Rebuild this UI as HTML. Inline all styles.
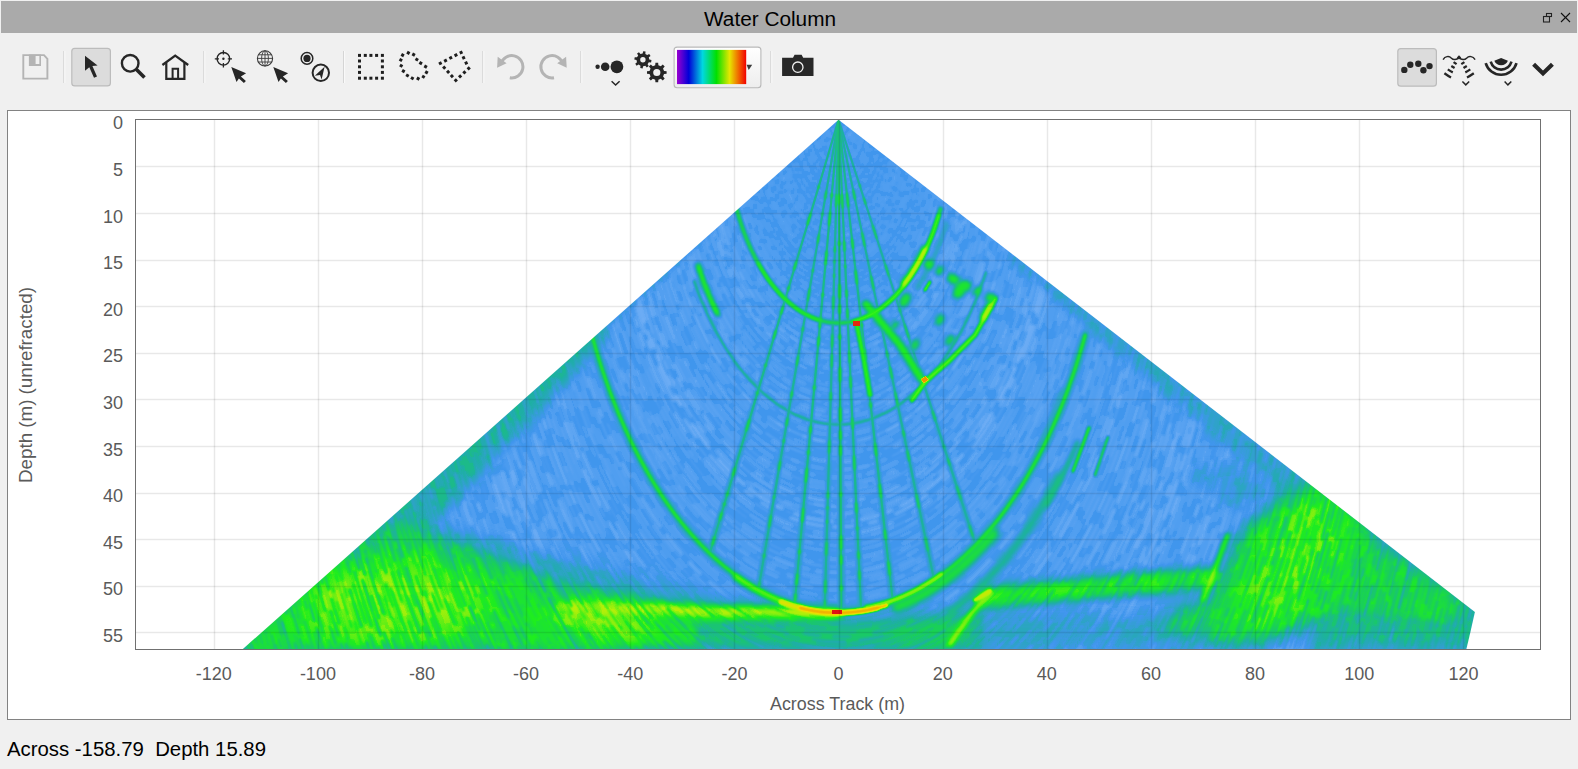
<!DOCTYPE html>
<html><head><meta charset="utf-8"><style>
html,body{margin:0;padding:0;width:1578px;height:769px;overflow:hidden;background:#f0f0f0;}
svg{position:absolute;left:0;top:0;}
text{font-family:"Liberation Sans",sans-serif;}
</style></head><body>
<svg width="1578" height="769" viewBox="0 0 1578 769">

<rect x="1" y="1" width="1576" height="32" fill="#aaaaaa"/>
<text x="704" y="26" font-size="20" fill="#000" textLength="132" lengthAdjust="spacingAndGlyphs">Water Column</text>
<g fill="none" stroke="#222" stroke-width="1.1"><rect x="1543.5" y="16.5" width="6" height="5.5"/><rect x="1546.5" y="13.5" width="5" height="3"/></g>
<g stroke="#111" stroke-width="1.1"><line x1="1561" y1="13" x2="1570" y2="22"/><line x1="1570" y1="13" x2="1561" y2="22"/></g>
<line x1="63.8" y1="51" x2="63.8" y2="83" stroke="#d2d2d2" stroke-width="1"/>
<line x1="64.8" y1="51" x2="64.8" y2="83" stroke="#fafafa" stroke-width="1"/>
<line x1="203.8" y1="51" x2="203.8" y2="83" stroke="#d2d2d2" stroke-width="1"/>
<line x1="204.8" y1="51" x2="204.8" y2="83" stroke="#fafafa" stroke-width="1"/>
<line x1="343.6" y1="51" x2="343.6" y2="83" stroke="#d2d2d2" stroke-width="1"/>
<line x1="344.6" y1="51" x2="344.6" y2="83" stroke="#fafafa" stroke-width="1"/>
<line x1="482.8" y1="51" x2="482.8" y2="83" stroke="#d2d2d2" stroke-width="1"/>
<line x1="483.8" y1="51" x2="483.8" y2="83" stroke="#fafafa" stroke-width="1"/>
<line x1="580.8" y1="51" x2="580.8" y2="83" stroke="#d2d2d2" stroke-width="1"/>
<line x1="581.8" y1="51" x2="581.8" y2="83" stroke="#fafafa" stroke-width="1"/>
<line x1="770.8" y1="51" x2="770.8" y2="83" stroke="#d2d2d2" stroke-width="1"/>
<line x1="771.8" y1="51" x2="771.8" y2="83" stroke="#fafafa" stroke-width="1"/>
<rect x="71.8" y="48.3" width="38.6" height="37.6" rx="3" fill="#dcdcdc" stroke="#bcbcbc" stroke-width="1.2"/>
<rect x="1397.8" y="48.6" width="38.6" height="37.6" rx="3" fill="#dcdcdc" stroke="#bcbcbc" stroke-width="1.2"/>
<path d="M23.3,55.1 H44 L47.4,58.8 V78.6 H23.3 Z" fill="none" stroke="#b4b4b4" stroke-width="1.9"/>
<path d="M28.9,54.5 H41 V65.9 H28.9 Z M35.6,56 V64 H39.4 V56 Z" fill="#b4b4b4" fill-rule="evenodd"/>
<path d="M85,55.7 L85,70.8 L89.3,67.2 L94,77.8 L97,76.4 L92.4,65.9 L97.6,65.4 Z" fill="#262626"/>
<circle cx="130.2" cy="63.3" r="8.3" fill="none" stroke="#262626" stroke-width="2.4"/>
<line x1="136.2" y1="69.2" x2="144.5" y2="77.6" stroke="#262626" stroke-width="3.6"/>
<path d="M162.4,65 L175.2,55.6 L188.2,65" fill="none" stroke="#262626" stroke-width="2.3"/>
<path d="M166.3,62.8 V78.9 H184.4 V62.8" fill="none" stroke="#262626" stroke-width="2.2"/>
<path d="M172.6,78.9 V68.7 H178.1 V78.9" fill="none" stroke="#262626" stroke-width="2"/>
<circle cx="223.4" cy="58.8" r="6.3" fill="none" stroke="#262626" stroke-width="1.4"/>
<circle cx="223.4" cy="58.8" r="1.2" fill="#262626"/>
<path d="M223.4,50.2 V54.5 M223.4,63.1 V67.5 M214.8,58.8 H219 M227.8,58.8 H232" stroke="#262626" stroke-width="1.3"/>
<path d="M231.3,66.9 L236.5,81.9 L238.9,78.4 L243.9,83.1 L245.9,81.1 L240.9,76.5 L246.1,73.2 Z" fill="#262626"/>
<circle cx="265" cy="58.4" r="7.6" fill="none" stroke="#3a3a3a" stroke-width="1.1"/>
<ellipse cx="265" cy="58.4" rx="3.4" ry="7.6" fill="none" stroke="#3a3a3a" stroke-width="0.9"/>
<path d="M265,50.8 V66 M257.6,58.4 H272.4 M258.6,54.8 H271.4 M258.6,62 H271.4" stroke="#3a3a3a" stroke-width="0.9"/>
<path d="M273.3,66.9 L278.5,81.9 L280.9,78.4 L285.9,83.1 L287.9,81.1 L282.9,76.5 L288.1,73.2 Z" fill="#262626"/>
<circle cx="307" cy="58.4" r="5.8" fill="none" stroke="#262626" stroke-width="1.5"/>
<circle cx="307" cy="58.4" r="3.6" fill="#262626"/>
<circle cx="320.8" cy="72.8" r="8.2" fill="none" stroke="#262626" stroke-width="2"/>
<path d="M324.6,66.8 L314.8,75.8 L320,75 L321.6,79.4 Z" fill="#262626"/>
<rect x="358.0" y="53.9" width="3" height="3" fill="#1e1e1e"/>
<rect x="358.0" y="76.7" width="3" height="3" fill="#1e1e1e"/>
<rect x="363.8" y="53.9" width="3" height="3" fill="#1e1e1e"/>
<rect x="363.8" y="76.7" width="3" height="3" fill="#1e1e1e"/>
<rect x="369.4" y="53.9" width="3" height="3" fill="#1e1e1e"/>
<rect x="369.4" y="76.7" width="3" height="3" fill="#1e1e1e"/>
<rect x="375.1" y="53.9" width="3" height="3" fill="#1e1e1e"/>
<rect x="375.1" y="76.7" width="3" height="3" fill="#1e1e1e"/>
<rect x="380.9" y="53.9" width="3" height="3" fill="#1e1e1e"/>
<rect x="380.9" y="76.7" width="3" height="3" fill="#1e1e1e"/>
<rect x="358.0" y="59.5" width="3" height="3" fill="#1e1e1e"/>
<rect x="380.9" y="59.5" width="3" height="3" fill="#1e1e1e"/>
<rect x="358.0" y="65.3" width="3" height="3" fill="#1e1e1e"/>
<rect x="380.9" y="65.3" width="3" height="3" fill="#1e1e1e"/>
<rect x="358.0" y="70.9" width="3" height="3" fill="#1e1e1e"/>
<rect x="380.9" y="70.9" width="3" height="3" fill="#1e1e1e"/>
<rect x="406.8" y="51.4" width="3" height="3" fill="#1e1e1e" transform="rotate(30 408.3 52.9)"/>
<rect x="412.1" y="53.1" width="3" height="3" fill="#1e1e1e" transform="rotate(30 413.6 54.6)"/>
<rect x="415.3" y="58.0" width="3" height="3" fill="#1e1e1e" transform="rotate(30 416.8 59.5)"/>
<rect x="419.2" y="61.6" width="3" height="3" fill="#1e1e1e" transform="rotate(30 420.7 63.1)"/>
<rect x="424.1" y="65.1" width="3" height="3" fill="#1e1e1e" transform="rotate(30 425.6 66.6)"/>
<rect x="425.0" y="70.9" width="3" height="3" fill="#1e1e1e" transform="rotate(30 426.5 72.4)"/>
<rect x="421.9" y="75.3" width="3" height="3" fill="#1e1e1e" transform="rotate(30 423.4 76.8)"/>
<rect x="416.6" y="77.1" width="3" height="3" fill="#1e1e1e" transform="rotate(30 418.1 78.6)"/>
<rect x="410.8" y="76.7" width="3" height="3" fill="#1e1e1e" transform="rotate(30 412.3 78.2)"/>
<rect x="405.9" y="74.0" width="3" height="3" fill="#1e1e1e" transform="rotate(30 407.4 75.5)"/>
<rect x="401.9" y="69.6" width="3" height="3" fill="#1e1e1e" transform="rotate(30 403.4 71.1)"/>
<rect x="399.7" y="64.2" width="3" height="3" fill="#1e1e1e" transform="rotate(30 401.2 65.7)"/>
<rect x="399.3" y="58.5" width="3" height="3" fill="#1e1e1e" transform="rotate(30 400.8 60)"/>
<rect x="401.1" y="53.6" width="3" height="3" fill="#1e1e1e" transform="rotate(30 402.6 55.1)"/>
<rect x="459.6" y="50.9" width="3" height="3" fill="#1e1e1e" transform="rotate(65 461.1 52.4)"/>
<rect x="462.1" y="56.2" width="3" height="3" fill="#1e1e1e" transform="rotate(65 463.6 57.7)"/>
<rect x="464.7" y="61.6" width="3" height="3" fill="#1e1e1e" transform="rotate(65 466.2 63.1)"/>
<rect x="467.2" y="66.9" width="3" height="3" fill="#1e1e1e" transform="rotate(137 468.7 68.4)"/>
<rect x="462.9" y="70.9" width="3" height="3" fill="#1e1e1e" transform="rotate(137 464.4 72.4)"/>
<rect x="458.6" y="74.9" width="3" height="3" fill="#1e1e1e" transform="rotate(137 460.1 76.4)"/>
<rect x="454.3" y="78.9" width="3" height="3" fill="#1e1e1e" transform="rotate(-132 455.8 80.4)"/>
<rect x="450.4" y="74.6" width="3" height="3" fill="#1e1e1e" transform="rotate(-132 451.9 76.1)"/>
<rect x="446.6" y="70.3" width="3" height="3" fill="#1e1e1e" transform="rotate(-132 448.1 71.8)"/>
<rect x="442.7" y="66.1" width="3" height="3" fill="#1e1e1e" transform="rotate(-132 444.2 67.6)"/>
<rect x="438.8" y="61.8" width="3" height="3" fill="#1e1e1e" transform="rotate(-28 440.3 63.3)"/>
<rect x="444.0" y="59.1" width="3" height="3" fill="#1e1e1e" transform="rotate(-28 445.5 60.6)"/>
<rect x="449.2" y="56.3" width="3" height="3" fill="#1e1e1e" transform="rotate(-28 450.7 57.8)"/>
<rect x="454.4" y="53.6" width="3" height="3" fill="#1e1e1e" transform="rotate(-28 455.9 55.1)"/>
<g><path d="M500.9,63.9 A11.2,11.2 0 1 1 509.8,77.8" fill="none" stroke="#b4b4b4" stroke-width="3"/><path d="M497.1,67.8 L497.7,56.8 L506.6,63.2 Z" fill="#b4b4b4"/></g>
<g transform="translate(1063.8,0) scale(-1,1)"><path d="M500.9,63.9 A11.2,11.2 0 1 1 509.8,77.8" fill="none" stroke="#b4b4b4" stroke-width="3"/><path d="M497.1,67.8 L497.7,56.8 L506.6,63.2 Z" fill="#b4b4b4"/></g>
<circle cx="597.6" cy="66.8" r="2.2" fill="#262626"/><circle cx="605.2" cy="66.8" r="4.3" fill="#262626"/><circle cx="616.9" cy="66.8" r="6.4" fill="#262626"/>
<path d="M611.6,81.2 L615.6,85 L619.6,81.2" fill="none" stroke="#262626" stroke-width="1.5"/>
<path d="M649.29,59.53 L651.49,60.12 L651.08,62.44 L648.82,62.24 L647.61,64.13 L648.75,66.10 L646.82,67.45 L645.36,65.71 L643.17,66.19 L642.58,68.39 L640.26,67.98 L640.46,65.72 L638.57,64.51 L636.60,65.65 L635.25,63.72 L636.99,62.26 L636.51,60.07 L634.31,59.48 L634.72,57.16 L636.98,57.36 L638.19,55.47 L637.05,53.50 L638.98,52.15 L640.44,53.89 L642.63,53.41 L643.22,51.21 L645.54,51.62 L645.34,53.88 L647.23,55.09 L649.20,53.95 L650.55,55.88 L648.81,57.34 Z M645.6,59.8 A2.7,2.7 0 1 0 640.1999999999999,59.8 A2.7,2.7 0 1 0 645.6,59.8 Z" fill="#262626" fill-rule="evenodd"/>
<path d="M664.03,70.91 L666.61,71.14 L666.61,73.86 L664.03,74.09 L663.03,76.49 L664.69,78.48 L662.78,80.39 L660.79,78.73 L658.39,79.73 L658.16,82.31 L655.44,82.31 L655.21,79.73 L652.81,78.73 L650.82,80.39 L648.91,78.48 L650.57,76.49 L649.57,74.09 L646.99,73.86 L646.99,71.14 L649.57,70.91 L650.57,68.51 L648.91,66.52 L650.82,64.61 L652.81,66.27 L655.21,65.27 L655.44,62.69 L658.16,62.69 L658.39,65.27 L660.79,66.27 L662.78,64.61 L664.69,66.52 L663.03,68.51 Z M660.4,72.5 A3.6,3.6 0 1 0 653.1999999999999,72.5 A3.6,3.6 0 1 0 660.4,72.5 Z" fill="#262626" fill-rule="evenodd"/>
<defs><linearGradient id="btng" x1="0" y1="0" x2="0" y2="1"><stop offset="0" stop-color="#ffffff"/><stop offset="1" stop-color="#ededed"/></linearGradient><linearGradient id="cmg" x1="0" y1="0" x2="1" y2="0"><stop offset="0" stop-color="#9a00d0"/><stop offset="0.17" stop-color="#0000d8"/><stop offset="0.37" stop-color="#00d8e0"/><stop offset="0.57" stop-color="#00e000"/><stop offset="0.76" stop-color="#e6e600"/><stop offset="0.88" stop-color="#f07000"/><stop offset="1" stop-color="#f20000"/></linearGradient></defs>
<rect x="674.1" y="47.1" width="86.8" height="40.6" rx="3" fill="url(#btng)" stroke="#b9b9b9" stroke-width="1.1"/>
<rect x="677" y="49.9" width="69.2" height="34.2" fill="url(#cmg)"/>
<path d="M746.6,64.8 L752.2,64.8 L748.7,69.9 Z" fill="#3a3a3a"/>
<path d="M782.1,57.7 H793 L794.6,54.7 H801.6 L803.2,57.7 H813.5 V76 H782.1 Z" fill="#282828"/>
<circle cx="797.8" cy="67.2" r="5.2" fill="none" stroke="#f0f0f0" stroke-width="1.3"/>
<circle cx="1404.3" cy="69.9" r="3.2" fill="#262626"/>
<circle cx="1410.3" cy="64.7" r="3.2" fill="#262626"/>
<circle cx="1418.3" cy="63.7" r="3.2" fill="#262626"/>
<circle cx="1423.4" cy="70.2" r="3.2" fill="#262626"/>
<circle cx="1429.5" cy="66.1" r="3.2" fill="#262626"/>
<path d="M1443.1,59.6 C1445,56.2 1449,55.6 1451.2,58 C1453.5,60.4 1456.5,60 1459,57.6 C1461.5,60 1464.5,60.4 1466.8,58 C1469,55.6 1473,56.2 1475.1,59.6" fill="none" stroke="#262626" stroke-width="1.5"/>
<path d="M1459,55.2 L1461.2,57.4 L1459,59.4 L1456.8,57.4 Z" fill="#262626"/>
<path d="M1453.6,62.1 Q1455.1,63.099999999999994 1456.6,64.1 M1451.3,66.0 Q1452.9499999999998,67.0 1454.6,68.0 M1447.8,69.4 Q1450.7,71.4 1452.8,72.4 M1444.4,73.3 Q1448.1000000000001,75.94999999999999 1451.0,77.6 M1461.3,64.1 Q1462.85,63.099999999999994 1464.4,62.1 M1463.5,68.0 Q1465.15,67.0 1466.8,66.0 M1465.3,72.4 Q1467.3999999999999,71.4 1470.3,69.4 M1467.0,77.6 Q1470.0,75.94999999999999 1473.8,73.3" fill="none" stroke="#262626" stroke-width="2.3"/>
<path d="M1462.4,81.5 L1465.8,84.9 L1469.2,81.5" fill="none" stroke="#262626" stroke-width="1.5"/>
<path d="M1516.5,63.1 A16.0,16.0 0 0 1 1485.7,63.1" fill="none" stroke="#262626" stroke-width="2.6"/>
<path d="M1511.5,61.7 A10.8,10.8 0 0 1 1490.7,61.7" fill="none" stroke="#262626" stroke-width="2.6"/>
<path d="M1494.3,60.7 L1501.1,58.0 L1507.9,60.7 A7.4,7.4 0 0 1 1494.3,60.7 Z" fill="#262626"/>
<path d="M1504.6,81.5 L1507.9,84.9 L1511.3,81.5" fill="none" stroke="#262626" stroke-width="1.5"/>
<path d="M1533.6,64.2 L1543,73.4 L1552.4,64.2" fill="none" stroke="#262626" stroke-width="4.2"/>
<rect x="7.5" y="110.5" width="1563" height="609" fill="#ffffff" stroke="#828282" stroke-width="1"/>
<defs>
<clipPath id="fan"><path d="M838.55,119.8 L242.9,649 L1466.4,649 A693,1240.5 0 0 0 1474.9,611.9 Z"/></clipPath>
<filter id="cmap" filterUnits="userSpaceOnUse" x="130" y="110" width="1420" height="550" color-interpolation-filters="sRGB"><feComponentTransfer><feFuncR type="table" tableValues="0.529 0.502 0.474 0.446 0.418 0.391 0.363 0.335 0.308 0.280 0.252 0.236 0.221 0.206 0.191 0.176 0.161 0.145 0.130 0.117 0.114 0.111 0.108 0.105 0.101 0.098 0.101 0.103 0.106 0.109 0.112 0.115 0.117 0.180 0.250 0.321 0.392 0.463 0.534 0.604 0.675 0.711 0.741 0.771 0.801 0.831 0.861 0.891 0.921 0.949 0.949 0.949 0.949 0.949 0.949 0.949 0.949 0.944 0.935 0.927 0.918 0.909 0.900 0.891 0.882"/><feFuncG type="table" tableValues="0.729 0.715 0.701 0.687 0.673 0.659 0.645 0.631 0.617 0.603 0.589 0.599 0.610 0.621 0.632 0.644 0.655 0.666 0.677 0.690 0.708 0.727 0.746 0.765 0.783 0.802 0.821 0.839 0.857 0.876 0.894 0.913 0.931 0.934 0.935 0.936 0.937 0.938 0.939 0.940 0.941 0.934 0.925 0.916 0.907 0.898 0.889 0.880 0.871 0.861 0.824 0.788 0.751 0.715 0.678 0.642 0.605 0.552 0.485 0.417 0.349 0.282 0.214 0.146 0.078"/><feFuncB type="table" tableValues="0.973 0.969 0.965 0.961 0.957 0.953 0.949 0.945 0.941 0.937 0.933 0.902 0.869 0.837 0.804 0.772 0.739 0.706 0.674 0.639 0.596 0.552 0.508 0.464 0.421 0.377 0.340 0.304 0.267 0.231 0.195 0.158 0.122 0.109 0.099 0.090 0.080 0.070 0.060 0.051 0.041 0.035 0.031 0.027 0.022 0.018 0.013 0.009 0.004 0.000 0.000 0.000 0.000 0.000 0.000 0.000 0.000 0.006 0.016 0.026 0.037 0.047 0.058 0.068 0.078"/></feComponentTransfer></filter>
<filter id="b1" filterUnits="userSpaceOnUse" x="100" y="80" width="1480" height="620"><feGaussianBlur stdDeviation="1"/></filter><filter id="b10" filterUnits="userSpaceOnUse" x="100" y="80" width="1480" height="620"><feGaussianBlur stdDeviation="10"/></filter><filter id="b16" filterUnits="userSpaceOnUse" x="100" y="80" width="1480" height="620"><feGaussianBlur stdDeviation="16"/></filter><filter id="b1_5" filterUnits="userSpaceOnUse" x="100" y="80" width="1480" height="620"><feGaussianBlur stdDeviation="1.5"/></filter><filter id="b2" filterUnits="userSpaceOnUse" x="100" y="80" width="1480" height="620"><feGaussianBlur stdDeviation="2"/></filter><filter id="b3" filterUnits="userSpaceOnUse" x="100" y="80" width="1480" height="620"><feGaussianBlur stdDeviation="3"/></filter><filter id="b4" filterUnits="userSpaceOnUse" x="100" y="80" width="1480" height="620"><feGaussianBlur stdDeviation="4"/></filter><filter id="b5" filterUnits="userSpaceOnUse" x="100" y="80" width="1480" height="620"><feGaussianBlur stdDeviation="5"/></filter><filter id="b6" filterUnits="userSpaceOnUse" x="100" y="80" width="1480" height="620"><feGaussianBlur stdDeviation="6"/></filter><filter id="b7" filterUnits="userSpaceOnUse" x="100" y="80" width="1480" height="620"><feGaussianBlur stdDeviation="7"/></filter><filter id="b8" filterUnits="userSpaceOnUse" x="100" y="80" width="1480" height="620"><feGaussianBlur stdDeviation="8"/></filter>
<style>.L{mix-blend-mode:lighten}.M{mix-blend-mode:multiply}</style>
</defs>
<g clip-path="url(#fan)"><g filter="url(#cmap)">
<rect x="130" y="110" width="1420" height="550" fill="rgb(40,40,40)"/>
<path class="L" d="M705.4,225.9 L172.6,650.5 L189.0,712.2 L707.3,233.4 Z" fill="rgb(74,74,74)" filter="url(#b4)"/>
<path class="L" d="M600.7,309.3 L172.6,650.5 L207.2,772.2 L607.8,335.7 Z" fill="rgb(85,85,85)" filter="url(#b6)"/>
<path class="L" d="M1011.1,250.9 L1509.6,629.6 L1496.5,681.5 L1009.1,258.9 Z" fill="rgb(66,66,66)" filter="url(#b4)"/>
<path class="L" d="M240.0,650.0 L300.0,585.0 L400.0,520.0 L480.0,548.0 L560.0,576.0 L640.0,593.0 L720.0,604.0 L838.0,612.0 L838.0,625.0 L700.0,628.0 L600.0,650.0 Z" fill="rgb(118,118,118)" filter="url(#b8)"/>
<path class="L" d="M240.0,650.0 L310.0,590.0 L400.0,545.0 L470.0,570.0 L560.0,595.0 L640.0,606.0 L700.0,614.0 L700.0,650.0 Z" fill="rgb(128,128,128)" filter="url(#b6)"/>
<ellipse class="L" cx="395.0" cy="600.0" rx="95" ry="40" transform="rotate(0 395.0 600.0)" fill="rgb(158,158,158)" filter="url(#b16)"/>
<ellipse class="L" cx="600.0" cy="622.0" rx="50" ry="16" transform="rotate(8 600.0 622.0)" fill="rgb(155,155,155)" filter="url(#b8)"/>
<path class="L" d="M560.0,606.0 L640.0,609.0 L720.0,612.0 L838.0,613.0" fill="none" stroke="rgb(168,168,168)" stroke-width="11" stroke-linecap="round" stroke-linejoin="round" filter="url(#b3)"/>
<path class="L" d="M395.0,515.0 L500.0,545.0 L600.0,570.0 L720.0,598.0 L600.0,592.0 L480.0,575.0 L400.0,555.0 Z" fill="rgb(74,74,74)" filter="url(#b10)"/>
<path class="L" d="M640.0,624.0 L760.0,624.0 L900.0,618.0 L985.0,610.0 L985.0,650.0 L640.0,650.0 Z" fill="rgb(98,98,98)" filter="url(#b7)"/>
<path class="L" d="M985.0,598.0 L1050.0,592.0 L1120.0,585.0 L1210.0,578.0" fill="none" stroke="rgb(135,135,135)" stroke-width="22" stroke-linecap="round" stroke-linejoin="round" filter="url(#b5)"/>
<path class="L" d="M900.0,622.0 L1000.0,615.0 L1100.0,615.0 L1250.0,618.0 L1250.0,650.0 L900.0,650.0 Z" fill="rgb(64,64,64)" filter="url(#b8)"/>
<path class="L" d="M900.0,620.0 L960.0,620.0 L960.0,650.0 L900.0,650.0 Z" fill="rgb(105,105,105)" filter="url(#b8)"/>
<path class="L" d="M1150.0,625.0 L1205.0,598.0 L1245.0,525.0 L1305.0,488.0 L1480.0,612.0 L1450.0,628.0 L1340.0,618.0 L1230.0,645.0 Z" fill="rgb(122,122,122)" filter="url(#b8)"/>
<ellipse class="L" cx="1300.0" cy="552.0" rx="100" ry="36" transform="rotate(-58 1300.0 552.0)" fill="rgb(152,152,152)" filter="url(#b16)"/>
<path class="L" d="M1330.0,600.0 L1480.0,615.0 L1470.0,650.0 L1300.0,650.0 Z" fill="rgb(96,96,96)" filter="url(#b10)"/>
<path class="L" d="M1180.0,470.0 L1285.0,468.0 L1250.0,520.0 Z" fill="rgb(62,62,62)" filter="url(#b8)"/>
<g style="mix-blend-mode:difference" fill="none" filter="url(#b1_5)"><path d="M831.4,125.3 A7.8,14.0 0 0 0 845.7,125.3" stroke="rgb(26,26,26)" stroke-opacity="1.0" stroke-width="1.4" stroke-dasharray="9,5,9,4,10,5,5,2,10,4,5,2,9,3,4,2" stroke-dashoffset="275"/><path d="M827.1,128.5 A12.5,22.3 0 0 0 850.0,128.5" stroke="rgb(34,34,34)" stroke-opacity="0.8" stroke-width="1.4" stroke-dasharray="9,2,2,5,3,2,3,2,6,2,9,3,9,5,5,5" stroke-dashoffset="119"/><path d="M824.9,130.2 A14.8,26.5 0 0 0 852.2,130.2" stroke="rgb(34,34,34)" stroke-opacity="0.8" stroke-width="1.4" stroke-dasharray="3,4,6,4,11,2,6,3,6,5,7,2,3,5,4,4" stroke-dashoffset="55"/><path d="M822.6,131.9 A17.3,31.0 0 0 0 854.5,131.9" stroke="rgb(38,38,38)" stroke-opacity="0.6" stroke-width="1.4" stroke-dasharray="2,2,5,2,3,4,8,4,9,2,5,3,7,2,7,3" stroke-dashoffset="7"/><path d="M820.2,133.8 A20.0,35.7 0 0 0 856.9,133.8" stroke="rgb(30,30,30)" stroke-opacity="0.6" stroke-width="1.4" stroke-dasharray="4,2,3,4,10,2,11,2,9,5,5,2,9,4,4,4" stroke-dashoffset="215"/><path d="M817.4,135.8 A22.9,41.1 0 0 0 859.7,135.8" stroke="rgb(26,26,26)" stroke-opacity="0.6" stroke-width="1.4" stroke-dasharray="7,2,5,2,8,5,4,2,4,2,9,3,2,3,7,4" stroke-dashoffset="37"/><path d="M814.8,137.8 A25.8,46.1 0 0 0 862.3,137.8" stroke="rgb(30,30,30)" stroke-opacity="1.0" stroke-width="1.4" stroke-dasharray="6,2,8,3,9,2,10,5,4,4,5,2,7,2,6,2" stroke-dashoffset="81"/><path d="M810.6,141.0 A30.3,54.3 0 0 0 866.5,141.0" stroke="rgb(26,26,26)" stroke-opacity="0.6" stroke-width="1.4" stroke-dasharray="10,2,9,2,4,2,3,5,6,2,8,3,9,4,7,5" stroke-dashoffset="89"/><path d="M808.0,143.0 A33.2,59.5 0 0 0 869.1,143.0" stroke="rgb(30,30,30)" stroke-opacity="0.6" stroke-width="1.4" stroke-dasharray="11,2,6,2,5,2,3,3,9,4,6,2,3,2,7,3" stroke-dashoffset="271"/><path d="M805.0,145.3 A36.4,65.2 0 0 0 872.1,145.3" stroke="rgb(34,34,34)" stroke-opacity="0.6" stroke-width="1.4" stroke-dasharray="9,3,10,5,4,5,3,2,10,3,7,2,2,2,10,2" stroke-dashoffset="159"/><path d="M800.7,148.5 A41.1,73.6 0 0 0 876.4,148.5" stroke="rgb(26,26,26)" stroke-opacity="1.0" stroke-width="1.4" stroke-dasharray="3,4,11,3,3,2,7,3,3,4,3,4,2,4,2,4" stroke-dashoffset="194"/><path d="M798.4,150.3 A43.6,78.1 0 0 0 878.7,150.3" stroke="rgb(26,26,26)" stroke-opacity="0.6" stroke-width="1.4" stroke-dasharray="3,2,6,4,7,4,9,4,9,5,3,5,10,2,7,2" stroke-dashoffset="246"/><path d="M794.2,153.5 A48.2,86.3 0 0 0 882.9,153.5" stroke="rgb(34,34,34)" stroke-opacity="0.6" stroke-width="1.4" stroke-dasharray="4,4,10,3,2,3,7,2,5,5,5,3,9,4,6,3" stroke-dashoffset="207"/><path d="M790.7,156.2 A52.0,93.1 0 0 0 886.4,156.2" stroke="rgb(34,34,34)" stroke-opacity="0.6" stroke-width="1.4" stroke-dasharray="5,2,8,2,7,2,4,2,10,3,3,2,6,2,4,4" stroke-dashoffset="241"/><path d="M786.7,159.2 A56.3,100.8 0 0 0 890.4,159.2" stroke="rgb(38,38,38)" stroke-opacity="0.6" stroke-width="1.4" stroke-dasharray="8,5,10,3,9,3,3,2,6,2,6,5,8,3,2,2" stroke-dashoffset="207"/><path d="M784.5,160.9 A58.7,105.1 0 0 0 892.6,160.9" stroke="rgb(26,26,26)" stroke-opacity="0.6" stroke-width="1.4" stroke-dasharray="6,2,4,2,4,4,4,5,8,2,5,2,10,3,5,2" stroke-dashoffset="241"/><path d="M781.9,162.9 A61.6,110.2 0 0 0 895.2,162.9" stroke="rgb(34,34,34)" stroke-opacity="0.8" stroke-width="1.4" stroke-dasharray="8,5,11,5,5,4,6,2,9,4,4,4,10,2,2,4" stroke-dashoffset="281"/><path d="M779.0,165.0 A64.7,115.8 0 0 0 898.1,165.0" stroke="rgb(34,34,34)" stroke-opacity="1.0" stroke-width="1.4" stroke-dasharray="6,2,4,2,6,4,4,3,12,3,7,2,8,5,4,2" stroke-dashoffset="225"/><path d="M775.9,167.4 A68.0,121.8 0 0 0 901.2,167.4" stroke="rgb(26,26,26)" stroke-opacity="0.6" stroke-width="1.4" stroke-dasharray="7,5,3,2,4,4,3,2,12,4,5,5,5,5,12,5" stroke-dashoffset="252"/><path d="M772.8,169.7 A71.4,127.8 0 0 0 904.3,169.7" stroke="rgb(38,38,38)" stroke-opacity="0.6" stroke-width="1.4" stroke-dasharray="13,3,13,2,13,6,13,3,8,4,7,3,5,6,13,3" stroke-dashoffset="293"/><path d="M769.8,172.0 A74.7,133.7 0 0 0 907.3,172.0" stroke="rgb(38,38,38)" stroke-opacity="0.8" stroke-width="1.4" stroke-dasharray="5,6,3,5,3,6,3,6,11,6,5,6,4,2,4,6" stroke-dashoffset="234"/><path d="M767.0,174.1 A77.7,139.0 0 0 0 910.1,174.1" stroke="rgb(30,30,30)" stroke-opacity="0.6" stroke-width="1.4" stroke-dasharray="13,6,5,4,12,6,14,4,5,3,11,2,8,2,3,2" stroke-dashoffset="99"/><path d="M764.9,175.8 A80.1,143.3 0 0 0 912.2,175.8" stroke="rgb(30,30,30)" stroke-opacity="1.0" stroke-width="1.4" stroke-dasharray="9,4,10,3,14,2,14,7,5,6,8,3,14,5,3,5" stroke-dashoffset="211"/><path d="M762.3,177.8 A82.9,148.3 0 0 0 914.8,177.8" stroke="rgb(30,30,30)" stroke-opacity="0.6" stroke-width="1.4" stroke-dasharray="15,3,15,3,15,7,6,3,11,3,10,4,7,3,7,2" stroke-dashoffset="68"/><path d="M758.5,180.6 A86.9,155.6 0 0 0 918.6,180.6" stroke="rgb(30,30,30)" stroke-opacity="0.6" stroke-width="1.4" stroke-dasharray="9,5,5,6,13,7,6,3,12,2,5,3,11,5,6,7" stroke-dashoffset="175"/><path d="M755.3,183.0 A90.4,161.8 0 0 0 921.8,183.0" stroke="rgb(26,26,26)" stroke-opacity="0.6" stroke-width="1.4" stroke-dasharray="4,2,17,7,15,3,8,3,6,3,8,3,10,2,5,3" stroke-dashoffset="236"/><path d="M752.5,185.2 A93.5,167.4 0 0 0 924.6,185.2" stroke="rgb(30,30,30)" stroke-opacity="0.6" stroke-width="1.4" stroke-dasharray="15,6,16,5,14,3,13,2,4,3,8,6,15,5,13,6" stroke-dashoffset="99"/><path d="M749.2,187.7 A97.0,173.7 0 0 0 927.9,187.7" stroke="rgb(30,30,30)" stroke-opacity="0.8" stroke-width="1.4" stroke-dasharray="4,5,6,6,9,8,12,4,11,2,8,6,7,5,18,6" stroke-dashoffset="221"/><path d="M746.6,189.7 A99.9,178.8 0 0 0 930.5,189.7" stroke="rgb(26,26,26)" stroke-opacity="0.8" stroke-width="1.4" stroke-dasharray="8,2,13,5,17,2,4,6,5,4,11,5,13,4,14,9" stroke-dashoffset="93"/><path d="M743.3,192.1 A103.4,185.1 0 0 0 933.8,192.1" stroke="rgb(34,34,34)" stroke-opacity="0.8" stroke-width="1.4" stroke-dasharray="18,4,7,7,4,3,7,4,11,7,15,8,5,4,15,2" stroke-dashoffset="50"/><path d="M740.6,194.2 A106.4,190.5 0 0 0 936.5,194.2" stroke="rgb(26,26,26)" stroke-opacity="0.8" stroke-width="2.0" stroke-dasharray="14,9,19,9,16,9,7,8,6,9,5,7,9,7,18,4" stroke-dashoffset="253"/><path d="M737.5,196.6 A109.7,196.4 0 0 0 939.6,196.6" stroke="rgb(38,38,38)" stroke-opacity="0.6" stroke-width="2.0" stroke-dasharray="20,7,13,7,20,6,18,5,21,6,13,2,4,5,5,4" stroke-dashoffset="209"/><path d="M733.8,199.4 A113.8,203.8 0 0 0 943.3,199.4" stroke="rgb(38,38,38)" stroke-opacity="0.8" stroke-width="1.6" stroke-dasharray="6,10,14,2,11,8,19,5,12,2,20,3,18,3,12,3" stroke-dashoffset="25"/><path d="M731.2,201.4 A116.7,208.8 0 0 0 945.9,201.4" stroke="rgb(30,30,30)" stroke-opacity="0.6" stroke-width="2.0" stroke-dasharray="6,7,21,3,8,7,18,3,17,8,12,10,17,7,21,3" stroke-dashoffset="148"/><path d="M728.8,203.2 A119.3,213.5 0 0 0 948.3,203.2" stroke="rgb(34,34,34)" stroke-opacity="0.8" stroke-width="1.6" stroke-dasharray="14,10,16,6,13,11,11,6,12,5,12,10,11,2,6,2" stroke-dashoffset="138"/><path d="M725.3,205.9 A123.1,220.3 0 0 0 951.8,205.9" stroke="rgb(30,30,30)" stroke-opacity="0.6" stroke-width="1.6" stroke-dasharray="8,5,23,6,7,3,10,11,13,7,21,9,16,5,16,7" stroke-dashoffset="253"/><path d="M722.1,208.2 A126.5,226.4 0 0 0 955.0,208.2" stroke="rgb(26,26,26)" stroke-opacity="1.0" stroke-width="1.6" stroke-dasharray="12,9,19,6,18,4,17,4,16,7,24,4,19,8,8,9" stroke-dashoffset="165"/><path d="M719.0,210.6 A129.8,232.4 0 0 0 958.1,210.6" stroke="rgb(26,26,26)" stroke-opacity="0.8" stroke-width="2.4" stroke-dasharray="22,9,16,2,7,7,12,3,16,10,16,7,10,6,17,7" stroke-dashoffset="187"/><path d="M715.9,213.0 A133.2,238.4 0 0 0 961.2,213.0" stroke="rgb(38,38,38)" stroke-opacity="0.6" stroke-width="2.4" stroke-dasharray="15,10,24,7,22,7,13,9,24,6,8,8,18,2,18,9" stroke-dashoffset="299"/><path d="M712.6,215.5 A136.9,245.0 0 0 0 964.5,215.5" stroke="rgb(26,26,26)" stroke-opacity="1.0" stroke-width="2.0" stroke-dasharray="19,12,11,12,12,5,8,10,16,2,14,11,7,12,11,12" stroke-dashoffset="151"/><path d="M710.3,217.3 A139.4,249.4 0 0 0 966.8,217.3" stroke="rgb(34,34,34)" stroke-opacity="0.8" stroke-width="2.0" stroke-dasharray="26,7,26,3,18,3,16,4,17,3,6,4,9,10,14,6" stroke-dashoffset="250"/><path d="M707.4,219.5 A142.5,255.1 0 0 0 969.7,219.5" stroke="rgb(26,26,26)" stroke-opacity="0.6" stroke-width="2.0" stroke-dasharray="18,4,24,11,26,3,7,10,19,2,20,3,23,12,6,12" stroke-dashoffset="185"/><path d="M703.2,222.6 A147.0,263.2 0 0 0 973.9,222.6" stroke="rgb(30,30,30)" stroke-opacity="0.6" stroke-width="1.6" stroke-dasharray="11,6,12,10,12,8,14,10,23,12,17,7,8,11,18,4" stroke-dashoffset="155"/><path d="M699.4,225.5 A151.1,270.5 0 0 0 977.7,225.5" stroke="rgb(38,38,38)" stroke-opacity="0.6" stroke-width="2.0" stroke-dasharray="7,14,25,3,19,4,14,5,20,6,16,12,27,7,24,5" stroke-dashoffset="143"/><path d="M695.9,228.2 A154.9,277.3 0 0 0 981.2,228.2" stroke="rgb(34,34,34)" stroke-opacity="0.6" stroke-width="2.4" stroke-dasharray="29,12,17,12,23,9,29,3,26,7,23,3,15,5,22,13" stroke-dashoffset="264"/><path d="M691.8,231.3 A159.5,285.4 0 0 0 985.3,231.3" stroke="rgb(26,26,26)" stroke-opacity="0.6" stroke-width="2.4" stroke-dasharray="6,12,22,12,17,11,13,11,13,9,12,8,29,5,18,13" stroke-dashoffset="273"/><path d="M688.0,234.2 A163.6,292.8 0 0 0 989.1,234.2" stroke="rgb(38,38,38)" stroke-opacity="0.6" stroke-width="2.4" stroke-dasharray="6,6,13,5,10,10,18,13,11,13,27,4,30,13,20,2" stroke-dashoffset="96"/><path d="M685.6,236.0 A166.2,297.4 0 0 0 991.5,236.0" stroke="rgb(34,34,34)" stroke-opacity="0.6" stroke-width="2.4" stroke-dasharray="26,7,8,14,25,14,29,6,20,9,20,11,9,14,20,12" stroke-dashoffset="34"/><path d="M683.1,237.9 A168.8,302.2 0 0 0 994.0,237.9" stroke="rgb(34,34,34)" stroke-opacity="0.8" stroke-width="2.0" stroke-dasharray="25,12,12,12,7,11,28,7,20,15,12,12,7,7,13,9" stroke-dashoffset="192"/><path d="M679.8,240.4 A172.5,308.7 0 0 0 997.3,240.4" stroke="rgb(26,26,26)" stroke-opacity="0.6" stroke-width="2.4" stroke-dasharray="11,8,16,7,25,5,22,9,19,16,29,10,27,11,11,5" stroke-dashoffset="72"/><path d="M676.3,243.1 A176.3,315.6 0 0 0 1000.8,243.1" stroke="rgb(30,30,30)" stroke-opacity="1.0" stroke-width="1.6" stroke-dasharray="15,6,16,12,9,13,11,5,18,3,15,5,27,12,10,10" stroke-dashoffset="218"/><path d="M672.5,246.0 A180.4,323.0 0 0 0 1004.6,246.0" stroke="rgb(38,38,38)" stroke-opacity="0.6" stroke-width="2.4" stroke-dasharray="26,14,23,13,7,12,23,8,33,3,20,10,16,10,22,13" stroke-dashoffset="54"/><path d="M669.6,248.2 A183.6,328.6 0 0 0 1007.5,248.2" stroke="rgb(30,30,30)" stroke-opacity="0.6" stroke-width="1.6" stroke-dasharray="21,5,15,9,34,10,35,8,25,15,32,6,17,15,17,17" stroke-dashoffset="13"/><path d="M666.9,250.2 A186.5,333.8 0 0 0 1010.2,250.2" stroke="rgb(34,34,34)" stroke-opacity="0.6" stroke-width="2.4" stroke-dasharray="28,11,24,4,26,9,31,5,30,6,19,17,35,16,35,4" stroke-dashoffset="286"/><path d="M662.6,253.5 A191.1,342.1 0 0 0 1014.5,253.5" stroke="rgb(30,30,30)" stroke-opacity="0.8" stroke-width="2.4" stroke-dasharray="25,6,13,3,22,12,20,17,26,7,17,17,11,14,9,13" stroke-dashoffset="92"/><path d="M658.6,256.5 A195.5,349.9 0 0 0 1018.5,256.5" stroke="rgb(34,34,34)" stroke-opacity="0.6" stroke-width="2.4" stroke-dasharray="28,18,9,7,18,14,32,4,15,16,28,5,29,7,25,16" stroke-dashoffset="67"/><path d="M654.5,259.7 A200.0,358.0 0 0 0 1022.6,259.7" stroke="rgb(26,26,26)" stroke-opacity="1.0" stroke-width="2.0" stroke-dasharray="11,4,16,13,34,5,34,12,30,18,30,11,34,15,30,14" stroke-dashoffset="60"/><path d="M651.2,262.2 A203.6,364.4 0 0 0 1025.9,262.2" stroke="rgb(26,26,26)" stroke-opacity="0.8" stroke-width="2.4" stroke-dasharray="32,14,9,12,11,11,32,13,26,11,12,9,14,15,21,17" stroke-dashoffset="203"/><path d="M648.8,264.0 A206.2,369.0 0 0 0 1028.3,264.0" stroke="rgb(30,30,30)" stroke-opacity="0.6" stroke-width="2.4" stroke-dasharray="21,18,25,14,21,5,29,18,31,19,17,9,31,19,14,5" stroke-dashoffset="50"/><path d="M645.4,266.6 A209.9,375.6 0 0 0 1031.7,266.6" stroke="rgb(26,26,26)" stroke-opacity="0.8" stroke-width="1.6" stroke-dasharray="34,3,25,9,25,3,26,8,12,16,34,17,31,7,28,19" stroke-dashoffset="118"/><path d="M642.2,268.9 A213.3,381.7 0 0 0 1034.9,268.9" stroke="rgb(30,30,30)" stroke-opacity="1.0" stroke-width="2.4" stroke-dasharray="27,11,27,17,17,17,20,9,25,4,20,12,29,17,10,8" stroke-dashoffset="286"/><path d="M639.6,271.0 A216.2,386.9 0 0 0 1037.5,271.0" stroke="rgb(30,30,30)" stroke-opacity="1.0" stroke-width="1.6" stroke-dasharray="11,6,26,12,24,15,16,12,35,15,13,8,22,11,15,9" stroke-dashoffset="137"/><path d="M636.3,273.4 A219.7,393.2 0 0 0 1040.8,273.4" stroke="rgb(26,26,26)" stroke-opacity="1.0" stroke-width="1.6" stroke-dasharray="26,11,30,18,15,20,40,10,27,8,22,11,16,5,36,5" stroke-dashoffset="225"/><path d="M634.2,275.1 A222.0,397.4 0 0 0 1042.9,275.1" stroke="rgb(38,38,38)" stroke-opacity="0.6" stroke-width="2.0" stroke-dasharray="26,19,24,16,14,8,26,9,23,8,25,19,10,8,18,4" stroke-dashoffset="236"/><path d="M631.9,276.8 A224.5,401.9 0 0 0 1045.2,276.8" stroke="rgb(34,34,34)" stroke-opacity="1.0" stroke-width="2.4" stroke-dasharray="13,20,31,13,38,4,41,12,40,19,42,8,19,6,35,10" stroke-dashoffset="225"/><path d="M629.2,278.8 A227.4,407.1 0 0 0 1047.9,278.8" stroke="rgb(38,38,38)" stroke-opacity="1.0" stroke-width="2.0" stroke-dasharray="39,20,23,21,39,11,11,9,12,21,36,8,29,7,10,18" stroke-dashoffset="222"/><path d="M625.2,281.9 A231.8,414.8 0 0 0 1051.9,281.9" stroke="rgb(26,26,26)" stroke-opacity="1.0" stroke-width="2.4" stroke-dasharray="10,5,16,8,43,21,24,7,12,12,36,4,29,19,25,21" stroke-dashoffset="255"/><path d="M622.7,283.8 A234.5,419.8 0 0 0 1054.4,283.8" stroke="rgb(26,26,26)" stroke-opacity="0.6" stroke-width="1.6" stroke-dasharray="26,11,20,19,39,5,30,17,39,15,23,5,18,19,18,8" stroke-dashoffset="233"/><path d="M619.6,286.1 A237.8,425.7 0 0 0 1057.5,286.1" stroke="rgb(38,38,38)" stroke-opacity="0.6" stroke-width="1.6" stroke-dasharray="43,8,15,16,45,13,40,17,14,5,24,13,26,7,45,11" stroke-dashoffset="214"/><path d="M616.7,288.4 A241.0,431.4 0 0 0 1060.4,288.4" stroke="rgb(34,34,34)" stroke-opacity="0.6" stroke-width="1.6" stroke-dasharray="31,10,12,9,35,22,13,14,21,18,35,10,34,16,13,10" stroke-dashoffset="214"/><path d="M612.8,291.3 A245.2,438.9 0 0 0 1064.3,291.3" stroke="rgb(26,26,26)" stroke-opacity="1.0" stroke-width="2.0" stroke-dasharray="20,19,23,16,23,18,29,19,38,19,21,19,23,21,34,17" stroke-dashoffset="37"/><path d="M609.9,293.5 A248.4,444.6 0 0 0 1067.2,293.5" stroke="rgb(26,26,26)" stroke-opacity="0.6" stroke-width="2.0" stroke-dasharray="27,4,43,9,26,20,35,22,23,12,16,15,13,8,33,8" stroke-dashoffset="123"/><path d="M605.9,296.5 A252.7,452.3 0 0 0 1071.2,296.5" stroke="rgb(30,30,30)" stroke-opacity="0.8" stroke-width="2.0" stroke-dasharray="38,6,34,14,26,20,13,13,35,11,41,5,22,8,42,8" stroke-dashoffset="16"/><path d="M602.9,298.9 A256.1,458.3 0 0 0 1074.2,298.9" stroke="rgb(34,34,34)" stroke-opacity="0.6" stroke-width="1.6" stroke-dasharray="44,8,43,21,26,14,38,16,19,10,27,21,38,16,18,16" stroke-dashoffset="264"/><path d="M600.1,301.0 A259.1,463.7 0 0 0 1077.0,301.0" stroke="rgb(38,38,38)" stroke-opacity="0.6" stroke-width="2.0" stroke-dasharray="32,10,18,5,11,19,10,13,14,10,45,15,17,15,25,12" stroke-dashoffset="46"/><path d="M596.8,303.4 A262.6,470.0 0 0 0 1080.3,303.4" stroke="rgb(38,38,38)" stroke-opacity="0.6" stroke-width="2.0" stroke-dasharray="41,16,31,13,41,12,24,9,35,10,40,9,32,11,43,6" stroke-dashoffset="175"/><path d="M593.4,306.0 A266.3,476.6 0 0 0 1083.7,306.0" stroke="rgb(26,26,26)" stroke-opacity="0.6" stroke-width="2.0" stroke-dasharray="45,13,11,16,17,15,14,16,27,5,34,19,29,19,30,12" stroke-dashoffset="37"/><path d="M590.6,308.2 A269.4,482.2 0 0 0 1086.5,308.2" stroke="rgb(34,34,34)" stroke-opacity="0.6" stroke-width="2.0" stroke-dasharray="33,22,29,12,21,19,34,14,33,4,23,6,13,21,36,17" stroke-dashoffset="32"/><path d="M586.5,311.3 A273.8,490.1 0 0 0 1090.6,311.3" stroke="rgb(30,30,30)" stroke-opacity="1.0" stroke-width="1.6" stroke-dasharray="34,16,12,8,42,12,29,19,33,19,11,8,22,12,24,12" stroke-dashoffset="112"/><path d="M582.4,314.4 A278.3,498.1 0 0 0 1094.7,314.4" stroke="rgb(30,30,30)" stroke-opacity="0.6" stroke-width="1.6" stroke-dasharray="35,4,25,21,41,21,15,21,31,12,32,7,11,14,23,16" stroke-dashoffset="80"/><path d="M579.5,316.6 A281.4,503.7 0 0 0 1097.6,316.6" stroke="rgb(26,26,26)" stroke-opacity="0.6" stroke-width="2.4" stroke-dasharray="41,22,28,15,36,13,33,21,41,11,25,15,30,9,42,8" stroke-dashoffset="32"/><path d="M576.7,318.8 A284.5,509.2 0 0 0 1100.4,318.8" stroke="rgb(30,30,30)" stroke-opacity="0.8" stroke-width="1.6" stroke-dasharray="38,20,40,5,20,17,40,5,32,12,35,20,35,12,26,15" stroke-dashoffset="167"/><path d="M572.7,321.8 A288.8,517.0 0 0 0 1104.4,321.8" stroke="rgb(38,38,38)" stroke-opacity="0.8" stroke-width="2.4" stroke-dasharray="18,22,36,8,27,9,18,10,34,13,24,9,10,19,18,12" stroke-dashoffset="138"/><path d="M569.1,324.5 A292.7,523.9 0 0 0 1108.0,324.5" stroke="rgb(34,34,34)" stroke-opacity="0.6" stroke-width="2.0" stroke-dasharray="34,8,13,9,17,5,22,13,32,21,17,16,31,4,44,19" stroke-dashoffset="87"/><path d="M566.0,326.9 A296.1,530.0 0 0 0 1111.1,326.9" stroke="rgb(38,38,38)" stroke-opacity="0.6" stroke-width="1.6" stroke-dasharray="28,11,35,17,19,22,34,10,44,13,19,18,21,7,45,12" stroke-dashoffset="249"/><path d="M563.1,329.0 A299.2,535.5 0 0 0 1114.0,329.0" stroke="rgb(26,26,26)" stroke-opacity="0.6" stroke-width="2.0" stroke-dasharray="11,12,19,12,35,12,30,11,15,19,22,15,45,12,45,5" stroke-dashoffset="77"/><path d="M559.5,331.8 A303.1,542.5 0 0 0 1117.6,331.8" stroke="rgb(34,34,34)" stroke-opacity="0.8" stroke-width="1.6" stroke-dasharray="10,9,31,19,18,10,36,19,12,17,32,21,35,21,13,10" stroke-dashoffset="281"/><path d="M555.4,335.0 A307.7,550.7 0 0 0 1121.7,335.0" stroke="rgb(26,26,26)" stroke-opacity="0.6" stroke-width="1.6" stroke-dasharray="25,18,13,9,11,9,44,7,14,12,32,4,45,13,14,20" stroke-dashoffset="238"/><path d="M551.1,338.2 A312.2,558.9 0 0 0 1126.0,338.2" stroke="rgb(30,30,30)" stroke-opacity="0.8" stroke-width="2.0" stroke-dasharray="10,20,26,11,41,16,29,21,16,19,35,17,26,4,10,22" stroke-dashoffset="72"/><path d="M547.4,341.0 A316.3,566.1 0 0 0 1129.7,341.0" stroke="rgb(34,34,34)" stroke-opacity="1.0" stroke-width="1.6" stroke-dasharray="42,12,33,18,32,13,27,6,30,7,26,14,23,9,23,5" stroke-dashoffset="66"/><path d="M544.9,342.9 A319.0,571.1 0 0 0 1132.2,342.9" stroke="rgb(26,26,26)" stroke-opacity="0.6" stroke-width="2.0" stroke-dasharray="16,8,19,15,32,9,37,4,10,16,42,5,35,7,30,21" stroke-dashoffset="104"/><path d="M542.6,344.7 A321.5,575.5 0 0 0 1134.5,344.7" stroke="rgb(30,30,30)" stroke-opacity="1.0" stroke-width="2.4" stroke-dasharray="16,22,30,17,40,11,41,17,21,12,14,16,30,9,32,20" stroke-dashoffset="5"/><path d="M539.0,347.4 A325.4,582.5 0 0 0 1138.1,347.4" stroke="rgb(26,26,26)" stroke-opacity="1.0" stroke-width="1.6" stroke-dasharray="13,10,32,18,37,20,17,7,39,17,39,17,34,20,24,16" stroke-dashoffset="277"/><path d="M535.7,349.9 A329.0,588.9 0 0 0 1141.4,349.9" stroke="rgb(26,26,26)" stroke-opacity="0.6" stroke-width="2.0" stroke-dasharray="38,18,28,22,12,5,30,8,44,18,31,12,30,10,40,21" stroke-dashoffset="205"/><path d="M533.3,351.7 A331.6,593.6 0 0 0 1143.8,351.7" stroke="rgb(26,26,26)" stroke-opacity="0.8" stroke-width="1.6" stroke-dasharray="21,8,17,7,42,12,26,6,21,5,31,12,43,15,39,10" stroke-dashoffset="274"/><path d="M530.1,354.2 A335.1,599.8 0 0 0 1147.0,354.2" stroke="rgb(26,26,26)" stroke-opacity="0.8" stroke-width="1.6" stroke-dasharray="25,6,16,21,38,19,25,6,41,5,45,6,19,15,21,7" stroke-dashoffset="170"/><path d="M526.1,357.2 A339.4,607.5 0 0 0 1151.0,357.2" stroke="rgb(34,34,34)" stroke-opacity="1.0" stroke-width="2.0" stroke-dasharray="17,17,21,16,11,18,41,6,15,10,44,14,22,21,37,16" stroke-dashoffset="7"/><path d="M522.1,360.2 A343.7,615.2 0 0 0 1155.0,360.2" stroke="rgb(26,26,26)" stroke-opacity="1.0" stroke-width="1.6" stroke-dasharray="27,10,23,9,18,9,39,5,18,12,17,12,32,15,29,10" stroke-dashoffset="4"/><path d="M518.4,363.0 A347.8,622.5 0 0 0 1158.7,363.0" stroke="rgb(38,38,38)" stroke-opacity="0.6" stroke-width="2.0" stroke-dasharray="33,13,36,10,19,6,27,17,33,17,27,18,18,20,17,7" stroke-dashoffset="177"/><path d="M515.0,365.6 A351.5,629.1 0 0 0 1162.1,365.6" stroke="rgb(38,38,38)" stroke-opacity="1.0" stroke-width="2.0" stroke-dasharray="28,7,28,6,39,11,40,16,22,17,24,18,14,15,36,14" stroke-dashoffset="144"/><path d="M512.2,367.7 A354.5,634.6 0 0 0 1164.9,367.7" stroke="rgb(26,26,26)" stroke-opacity="0.8" stroke-width="1.6" stroke-dasharray="10,11,10,17,33,8,26,16,36,12,31,7,16,21,16,18" stroke-dashoffset="107"/><path d="M509.2,370.0 A357.7,640.3 0 0 0 1167.9,370.0" stroke="rgb(26,26,26)" stroke-opacity="0.6" stroke-width="1.6" stroke-dasharray="32,4,19,19,14,15,20,18,42,14,40,5,24,4,35,17" stroke-dashoffset="117"/><path d="M504.9,373.3 A362.4,648.7 0 0 0 1172.2,373.3" stroke="rgb(38,38,38)" stroke-opacity="0.8" stroke-width="1.6" stroke-dasharray="35,10,43,22,23,19,33,8,42,16,16,6,10,9,26,19" stroke-dashoffset="61"/><path d="M502.7,374.9 A364.8,653.0 0 0 0 1174.4,374.9" stroke="rgb(34,34,34)" stroke-opacity="0.8" stroke-width="2.0" stroke-dasharray="33,4,16,15,36,21,45,21,17,7,29,20,17,6,25,8" stroke-dashoffset="45"/><path d="M498.9,377.9 A369.0,660.4 0 0 0 1178.2,377.9" stroke="rgb(30,30,30)" stroke-opacity="0.8" stroke-width="2.4" stroke-dasharray="25,22,36,18,13,10,38,9,45,7,39,8,16,20,19,8" stroke-dashoffset="288"/><path d="M495.4,380.5 A372.8,667.2 0 0 0 1181.7,380.5" stroke="rgb(38,38,38)" stroke-opacity="0.8" stroke-width="2.0" stroke-dasharray="17,17,10,11,19,7,34,9,28,20,11,16,17,19,29,21" stroke-dashoffset="23"/><path d="M493.1,382.3 A375.3,671.7 0 0 0 1184.0,382.3" stroke="rgb(34,34,34)" stroke-opacity="0.6" stroke-width="2.0" stroke-dasharray="26,21,17,17,31,19,23,21,18,22,42,7,35,13,27,12" stroke-dashoffset="112"/><path d="M489.2,385.2 A379.5,679.2 0 0 0 1187.9,385.2" stroke="rgb(26,26,26)" stroke-opacity="1.0" stroke-width="2.0" stroke-dasharray="34,15,37,14,38,7,13,13,43,5,20,20,34,21,30,16" stroke-dashoffset="114"/><path d="M487.0,386.9 A381.9,683.6 0 0 0 1190.1,386.9" stroke="rgb(30,30,30)" stroke-opacity="1.0" stroke-width="2.4" stroke-dasharray="33,19,24,20,43,19,10,15,36,22,16,4,32,11,33,15" stroke-dashoffset="154"/><path d="M484.7,388.6 A384.4,688.0 0 0 0 1192.4,388.6" stroke="rgb(26,26,26)" stroke-opacity="0.6" stroke-width="2.0" stroke-dasharray="21,19,17,20,32,5,15,10,26,22,27,17,33,16,15,13" stroke-dashoffset="292"/><path d="M480.5,391.9 A389.0,696.3 0 0 0 1196.6,391.9" stroke="rgb(30,30,30)" stroke-opacity="1.0" stroke-width="2.4" stroke-dasharray="26,14,12,14,19,8,28,13,13,19,13,16,15,21,18,14" stroke-dashoffset="11"/><path d="M478.3,393.5 A391.4,700.5 0 0 0 1198.8,393.5" stroke="rgb(26,26,26)" stroke-opacity="1.0" stroke-width="1.6" stroke-dasharray="40,17,31,6,21,6,38,8,34,18,37,7,38,14,14,7" stroke-dashoffset="182"/><path d="M475.3,395.8 A394.7,706.4 0 0 0 1201.8,395.8" stroke="rgb(38,38,38)" stroke-opacity="0.8" stroke-width="2.0" stroke-dasharray="45,7,23,7,36,14,44,8,17,8,27,19,36,5,37,16" stroke-dashoffset="102"/><path d="M471.6,398.6 A398.6,713.5 0 0 0 1205.5,398.6" stroke="rgb(38,38,38)" stroke-opacity="0.8" stroke-width="2.4" stroke-dasharray="34,20,40,7,45,9,30,10,10,15,20,15,34,22,43,16" stroke-dashoffset="231"/><path d="M469.1,400.5 A401.3,718.3 0 0 0 1208.0,400.5" stroke="rgb(30,30,30)" stroke-opacity="0.8" stroke-width="2.4" stroke-dasharray="35,14,15,19,24,12,32,17,12,12,14,12,34,11,23,17" stroke-dashoffset="33"/><path d="M466.0,402.8 A404.7,724.4 0 0 0 1211.1,402.8" stroke="rgb(34,34,34)" stroke-opacity="0.8" stroke-width="1.6" stroke-dasharray="41,7,24,9,16,13,42,8,12,15,20,21,41,14,41,8" stroke-dashoffset="228"/><path d="M463.3,404.9 A407.6,729.6 0 0 0 1213.8,404.9" stroke="rgb(34,34,34)" stroke-opacity="0.6" stroke-width="1.6" stroke-dasharray="19,10,22,21,32,7,20,10,20,15,30,15,16,13,26,7" stroke-dashoffset="127"/><path d="M460.0,407.4 A411.2,736.1 0 0 0 1217.1,407.4" stroke="rgb(30,30,30)" stroke-opacity="1.0" stroke-width="1.6" stroke-dasharray="26,13,28,12,45,8,26,19,14,12,11,13,27,20,19,16" stroke-dashoffset="81"/><path d="M456.7,409.9 A414.9,742.5 0 0 0 1220.4,409.9" stroke="rgb(34,34,34)" stroke-opacity="0.6" stroke-width="1.6" stroke-dasharray="20,21,26,13,13,17,33,21,24,19,38,15,32,10,42,12" stroke-dashoffset="289"/><path d="M452.5,413.1 A419.4,750.7 0 0 0 1224.6,413.1" stroke="rgb(30,30,30)" stroke-opacity="1.0" stroke-width="2.4" stroke-dasharray="17,22,14,13,10,7,17,10,33,13,32,8,13,6,19,4" stroke-dashoffset="211"/><path d="M449.1,415.7 A423.0,757.2 0 0 0 1228.0,415.7" stroke="rgb(26,26,26)" stroke-opacity="0.6" stroke-width="2.0" stroke-dasharray="37,20,21,6,43,15,41,10,16,17,18,19,22,6,41,4" stroke-dashoffset="285"/><path d="M446.4,417.7 A426.0,762.5 0 0 0 1230.7,417.7" stroke="rgb(34,34,34)" stroke-opacity="0.6" stroke-width="2.0" stroke-dasharray="24,12,19,21,19,17,11,19,30,9,15,20,20,5,16,7" stroke-dashoffset="152"/><path d="M444.2,419.4 A428.4,766.8 0 0 0 1232.9,419.4" stroke="rgb(34,34,34)" stroke-opacity="0.6" stroke-width="2.4" stroke-dasharray="21,20,15,4,33,6,23,16,24,17,32,14,24,15,35,4" stroke-dashoffset="123"/><path d="M441.3,421.7 A431.6,772.5 0 0 0 1235.8,421.7" stroke="rgb(34,34,34)" stroke-opacity="1.0" stroke-width="2.4" stroke-dasharray="31,20,32,18,25,17,21,10,19,10,26,18,40,11,31,9" stroke-dashoffset="121"/><path d="M437.9,424.2 A435.3,779.1 0 0 0 1239.2,424.2" stroke="rgb(30,30,30)" stroke-opacity="0.6" stroke-width="2.0" stroke-dasharray="11,9,29,11,14,13,42,14,23,5,25,21,15,6,42,11" stroke-dashoffset="226"/><path d="M434.5,426.8 A438.9,785.7 0 0 0 1242.6,426.8" stroke="rgb(26,26,26)" stroke-opacity="0.8" stroke-width="1.6" stroke-dasharray="18,15,32,6,14,16,18,17,24,14,23,16,28,21,14,19" stroke-dashoffset="7"/><path d="M431.5,429.0 A442.2,791.5 0 0 0 1245.6,429.0" stroke="rgb(30,30,30)" stroke-opacity="0.6" stroke-width="2.4" stroke-dasharray="14,17,20,8,14,10,20,19,24,14,31,8,18,8,30,5" stroke-dashoffset="98"/><path d="M427.9,431.8 A446.1,798.5 0 0 0 1249.2,431.8" stroke="rgb(38,38,38)" stroke-opacity="1.0" stroke-width="2.0" stroke-dasharray="39,15,33,7,27,8,14,9,32,5,17,13,30,9,17,12" stroke-dashoffset="269"/><path d="M423.7,435.0 A450.7,806.7 0 0 0 1253.4,435.0" stroke="rgb(26,26,26)" stroke-opacity="0.6" stroke-width="1.6" stroke-dasharray="15,11,11,6,29,20,21,9,31,22,16,13,40,18,32,19" stroke-dashoffset="238"/><path d="M419.5,438.2 A455.2,814.8 0 0 0 1257.6,438.2" stroke="rgb(38,38,38)" stroke-opacity="0.6" stroke-width="1.6" stroke-dasharray="11,18,35,21,13,13,20,5,21,16,23,4,11,11,37,19" stroke-dashoffset="32"/><path d="M416.6,440.4 A458.4,820.4 0 0 0 1260.5,440.4" stroke="rgb(38,38,38)" stroke-opacity="0.8" stroke-width="2.0" stroke-dasharray="20,13,12,14,26,21,33,19,26,14,20,15,19,22,36,17" stroke-dashoffset="276"/><path d="M412.4,443.6 A462.9,828.6 0 0 0 1264.7,443.6" stroke="rgb(26,26,26)" stroke-opacity="0.8" stroke-width="2.0" stroke-dasharray="41,11,20,18,42,21,28,9,30,11,45,22,35,9,31,13" stroke-dashoffset="49"/><path d="M409.0,446.1 A466.6,835.2 0 0 0 1268.1,446.1" stroke="rgb(34,34,34)" stroke-opacity="1.0" stroke-width="2.0" stroke-dasharray="41,20,34,4,41,16,27,19,39,5,15,14,41,19,13,8" stroke-dashoffset="13"/><path d="M406.8,447.8 A469.1,839.6 0 0 0 1270.3,447.8" stroke="rgb(30,30,30)" stroke-opacity="0.8" stroke-width="2.0" stroke-dasharray="27,5,25,22,35,5,26,10,42,7,37,15,45,5,14,19" stroke-dashoffset="246"/><path d="M402.8,450.9 A473.4,847.3 0 0 0 1274.3,450.9" stroke="rgb(26,26,26)" stroke-opacity="1.0" stroke-width="2.4" stroke-dasharray="42,20,31,10,23,18,29,8,25,12,29,9,17,19,29,11" stroke-dashoffset="22"/><path d="M399.9,453.1 A476.5,852.9 0 0 0 1277.2,453.1" stroke="rgb(34,34,34)" stroke-opacity="0.8" stroke-width="2.4" stroke-dasharray="35,6,20,7,26,13,34,13,26,9,26,8,13,17,36,16" stroke-dashoffset="1"/><path d="M395.8,456.2 A481.0,861.0 0 0 0 1281.3,456.2" stroke="rgb(26,26,26)" stroke-opacity="1.0" stroke-width="2.0" stroke-dasharray="24,16,32,5,11,9,41,11,24,7,19,20,37,14,39,12" stroke-dashoffset="95"/><path d="M392.1,459.0 A485.0,868.1 0 0 0 1285.0,459.0" stroke="rgb(26,26,26)" stroke-opacity="0.6" stroke-width="1.6" stroke-dasharray="16,14,31,5,11,13,44,22,29,18,13,14,16,12,23,20" stroke-dashoffset="249"/><path d="M388.1,462.0 A489.3,875.9 0 0 0 1289.0,462.0" stroke="rgb(34,34,34)" stroke-opacity="1.0" stroke-width="2.4" stroke-dasharray="44,5,40,20,25,13,22,22,33,11,37,14,35,6,31,5" stroke-dashoffset="181"/><path d="M384.8,464.5 A492.9,882.3 0 0 0 1292.3,464.5" stroke="rgb(26,26,26)" stroke-opacity="0.6" stroke-width="1.6" stroke-dasharray="23,17,25,19,15,7,37,17,40,17,45,20,26,22,44,17" stroke-dashoffset="6"/><path d="M381.0,467.4 A497.1,889.7 0 0 0 1296.1,467.4" stroke="rgb(26,26,26)" stroke-opacity="1.0" stroke-width="1.6" stroke-dasharray="13,8,21,21,27,22,30,12,12,5,39,5,37,7,40,10" stroke-dashoffset="129"/><path d="M378.8,469.1 A499.4,893.9 0 0 0 1298.3,469.1" stroke="rgb(38,38,38)" stroke-opacity="0.6" stroke-width="2.0" stroke-dasharray="39,18,18,17,41,22,25,16,25,17,12,6,18,11,13,22" stroke-dashoffset="242"/><path d="M376.5,470.8 A501.9,898.4 0 0 0 1300.6,470.8" stroke="rgb(34,34,34)" stroke-opacity="0.6" stroke-width="1.6" stroke-dasharray="35,18,16,10,25,19,30,7,31,13,11,11,42,22,36,16" stroke-dashoffset="98"/><path d="M372.8,473.6 A505.9,905.6 0 0 0 1304.3,473.6" stroke="rgb(38,38,38)" stroke-opacity="1.0" stroke-width="2.4" stroke-dasharray="38,10,33,17,23,18,37,14,23,4,36,13,15,18,40,21" stroke-dashoffset="232"/><path d="M368.6,476.9 A510.6,913.9 0 0 0 1308.5,476.9" stroke="rgb(34,34,34)" stroke-opacity="0.8" stroke-width="2.0" stroke-dasharray="35,6,24,13,24,18,37,10,29,11,15,21,31,22,35,4" stroke-dashoffset="213"/><path d="M366.2,478.7 A513.1,918.4 0 0 0 1310.9,478.7" stroke="rgb(38,38,38)" stroke-opacity="1.0" stroke-width="1.6" stroke-dasharray="34,11,35,13,22,17,13,19,13,10,35,6,31,15,40,12" stroke-dashoffset="131"/><path d="M361.9,481.9 A517.8,926.8 0 0 0 1315.2,481.9" stroke="rgb(26,26,26)" stroke-opacity="0.8" stroke-width="2.0" stroke-dasharray="18,22,30,20,11,12,31,20,41,14,20,19,41,13,36,8" stroke-dashoffset="50"/><path d="M358.6,484.4 A521.4,933.2 0 0 0 1318.5,484.4" stroke="rgb(34,34,34)" stroke-opacity="1.0" stroke-width="2.4" stroke-dasharray="38,22,11,13,32,17,13,6,10,13,44,9,33,10,34,12" stroke-dashoffset="74"/><path d="M355.4,486.9 A524.9,939.5 0 0 0 1321.7,486.9" stroke="rgb(26,26,26)" stroke-opacity="1.0" stroke-width="2.4" stroke-dasharray="44,15,35,16,19,13,25,10,21,4,17,6,11,10,26,4" stroke-dashoffset="250"/><path d="M353.2,488.6 A527.3,943.8 0 0 0 1323.9,488.6" stroke="rgb(30,30,30)" stroke-opacity="1.0" stroke-width="2.4" stroke-dasharray="28,14,23,15,30,14,23,19,30,4,38,22,28,20,32,11" stroke-dashoffset="280"/><path d="M350.3,490.7 A530.4,949.4 0 0 0 1326.8,490.7" stroke="rgb(38,38,38)" stroke-opacity="1.0" stroke-width="2.4" stroke-dasharray="31,18,37,9,21,22,20,19,32,15,23,14,24,19,33,5" stroke-dashoffset="117"/><path d="M348.0,492.5 A532.9,953.8 0 0 0 1329.1,492.5" stroke="rgb(26,26,26)" stroke-opacity="1.0" stroke-width="1.6" stroke-dasharray="14,21,11,7,30,5,32,19,44,16,14,7,36,4,21,21" stroke-dashoffset="139"/><path d="M344.4,495.2 A536.8,960.9 0 0 0 1332.7,495.2" stroke="rgb(34,34,34)" stroke-opacity="0.8" stroke-width="2.0" stroke-dasharray="30,5,39,13,24,21,11,15,25,15,10,11,28,13,26,4" stroke-dashoffset="8"/><path d="M341.0,497.9 A540.6,967.6 0 0 0 1336.1,497.9" stroke="rgb(34,34,34)" stroke-opacity="0.8" stroke-width="2.0" stroke-dasharray="27,9,17,9,16,19,42,10,29,21,38,20,25,17,34,15" stroke-dashoffset="258"/><path d="M337.7,500.4 A544.1,974.0 0 0 0 1339.4,500.4" stroke="rgb(38,38,38)" stroke-opacity="0.6" stroke-width="2.0" stroke-dasharray="44,11,28,4,28,13,35,5,12,18,28,20,22,15,45,18" stroke-dashoffset="190"/><path d="M334.4,502.8 A547.7,980.3 0 0 0 1342.7,502.8" stroke="rgb(26,26,26)" stroke-opacity="1.0" stroke-width="1.6" stroke-dasharray="24,22,22,6,17,11,44,14,44,17,42,21,29,5,28,20" stroke-dashoffset="182"/><path d="M332.2,504.5 A550.0,984.5 0 0 0 1344.9,504.5" stroke="rgb(34,34,34)" stroke-opacity="1.0" stroke-width="2.4" stroke-dasharray="19,16,17,18,45,17,44,22,13,22,21,6,39,11,41,10" stroke-dashoffset="228"/><path d="M328.8,507.1 A553.8,991.3 0 0 0 1348.3,507.1" stroke="rgb(34,34,34)" stroke-opacity="0.6" stroke-width="2.4" stroke-dasharray="10,11,23,6,25,13,31,9,45,20,16,9,26,10,24,9" stroke-dashoffset="29"/><path d="M324.9,510.1 A558.0,998.8 0 0 0 1352.2,510.1" stroke="rgb(38,38,38)" stroke-opacity="0.8" stroke-width="2.4" stroke-dasharray="18,10,11,9,40,14,26,9,30,7,10,5,29,16,26,16" stroke-dashoffset="94"/><path d="M320.6,513.3 A562.6,1007.1 0 0 0 1356.5,513.3" stroke="rgb(26,26,26)" stroke-opacity="0.8" stroke-width="2.0" stroke-dasharray="25,22,27,12,22,6,14,12,21,11,34,13,17,16,30,19" stroke-dashoffset="3"/><path d="M317.2,515.9 A566.4,1013.7 0 0 0 1359.9,515.9" stroke="rgb(30,30,30)" stroke-opacity="0.8" stroke-width="1.6" stroke-dasharray="17,20,26,5,17,4,33,15,45,14,34,8,21,10,42,4" stroke-dashoffset="255"/><path d="M314.0,518.3 A569.8,1020.0 0 0 0 1363.1,518.3" stroke="rgb(34,34,34)" stroke-opacity="0.6" stroke-width="2.4" stroke-dasharray="12,6,44,5,18,10,34,18,24,17,34,9,33,5,32,6" stroke-dashoffset="75"/><path d="M311.8,520.0 A572.3,1024.3 0 0 0 1365.3,520.0" stroke="rgb(38,38,38)" stroke-opacity="0.6" stroke-width="1.6" stroke-dasharray="11,11,34,8,15,5,18,14,12,22,17,11,28,9,22,18" stroke-dashoffset="57"/><path d="M308.2,522.7 A576.1,1031.2 0 0 0 1368.9,522.7" stroke="rgb(34,34,34)" stroke-opacity="0.6" stroke-width="2.0" stroke-dasharray="20,6,20,21,34,17,19,16,42,7,34,4,40,13,12,4" stroke-dashoffset="99"/><path d="M304.2,525.8 A580.5,1039.1 0 0 0 1372.9,525.8" stroke="rgb(38,38,38)" stroke-opacity="0.8" stroke-width="2.0" stroke-dasharray="35,13,44,13,18,9,34,15,16,5,26,13,29,13,25,7" stroke-dashoffset="95"/><path d="M301.8,527.6 A583.2,1043.8 0 0 0 1375.3,527.6" stroke="rgb(34,34,34)" stroke-opacity="0.6" stroke-width="2.0" stroke-dasharray="17,17,33,22,27,11,40,12,19,12,35,19,15,8,13,17" stroke-dashoffset="296"/><path d="M297.5,530.8 A587.7,1052.0 0 0 0 1379.6,530.8" stroke="rgb(26,26,26)" stroke-opacity="0.6" stroke-width="2.4" stroke-dasharray="34,10,27,18,11,12,21,15,42,10,44,12,22,16,45,14" stroke-dashoffset="0"/><path d="M295.4,532.5 A590.1,1056.2 0 0 0 1381.7,532.5" stroke="rgb(30,30,30)" stroke-opacity="0.8" stroke-width="2.4" stroke-dasharray="31,12,40,20,11,6,37,11,40,9,39,19,36,12,30,21" stroke-dashoffset="203"/><path d="M291.6,535.3 A594.2,1063.5 0 0 0 1385.5,535.3" stroke="rgb(30,30,30)" stroke-opacity="0.8" stroke-width="2.4" stroke-dasharray="39,21,19,10,18,9,12,17,36,9,44,10,32,5,33,7" stroke-dashoffset="18"/><path d="M287.7,538.3 A598.4,1071.1 0 0 0 1389.4,538.3" stroke="rgb(30,30,30)" stroke-opacity="0.6" stroke-width="2.4" stroke-dasharray="26,21,39,15,17,5,11,19,24,7,11,22,20,6,20,21" stroke-dashoffset="178"/><path d="M284.0,541.1 A602.4,1078.3 0 0 0 1393.1,541.1" stroke="rgb(38,38,38)" stroke-opacity="0.8" stroke-width="2.0" stroke-dasharray="32,7,33,15,37,21,25,5,44,14,28,18,28,17,39,10" stroke-dashoffset="5"/><path d="M280.8,543.5 A605.9,1084.5 0 0 0 1396.3,543.5" stroke="rgb(38,38,38)" stroke-opacity="0.8" stroke-width="2.4" stroke-dasharray="42,9,42,12,13,21,18,15,33,7,28,6,39,20,36,12" stroke-dashoffset="201"/><path d="M277.6,546.0 A609.4,1090.7 0 0 0 1399.5,546.0" stroke="rgb(34,34,34)" stroke-opacity="0.8" stroke-width="1.6" stroke-dasharray="32,6,17,5,35,21,15,8,38,8,37,7,24,8,38,13" stroke-dashoffset="159"/><path d="M273.9,548.8 A613.4,1097.9 0 0 0 1403.2,548.8" stroke="rgb(26,26,26)" stroke-opacity="0.8" stroke-width="2.4" stroke-dasharray="10,9,40,8,18,9,18,7,14,22,19,10,31,18,21,5" stroke-dashoffset="144"/><path d="M271.4,550.7 A616.1,1102.7 0 0 0 1405.7,550.7" stroke="rgb(38,38,38)" stroke-opacity="0.6" stroke-width="2.0" stroke-dasharray="14,7,45,5,31,19,35,10,12,9,40,19,29,13,36,10" stroke-dashoffset="37"/><path d="M267.9,553.3 A619.9,1109.5 0 0 0 1409.2,553.3" stroke="rgb(34,34,34)" stroke-opacity="0.6" stroke-width="2.0" stroke-dasharray="30,5,36,5,42,11,18,21,42,21,28,11,20,21,43,14" stroke-dashoffset="86"/><path d="M264.3,556.1 A623.8,1116.5 0 0 0 1412.8,556.1" stroke="rgb(30,30,30)" stroke-opacity="1.0" stroke-width="2.4" stroke-dasharray="24,18,14,7,42,7,24,9,25,17,41,19,33,10,33,6" stroke-dashoffset="90"/><path d="M261.6,558.1 A626.7,1121.8 0 0 0 1415.5,558.1" stroke="rgb(34,34,34)" stroke-opacity="0.8" stroke-width="2.4" stroke-dasharray="15,20,43,17,36,11,33,17,33,7,26,15,39,15,45,12" stroke-dashoffset="78"/><path d="M258.1,560.8 A630.6,1128.7 0 0 0 1419.0,560.8" stroke="rgb(26,26,26)" stroke-opacity="0.6" stroke-width="2.0" stroke-dasharray="26,16,30,22,16,9,29,22,34,7,19,20,15,21,26,19" stroke-dashoffset="115"/><path d="M254.4,563.6 A634.6,1135.8 0 0 0 1422.7,563.6" stroke="rgb(26,26,26)" stroke-opacity="0.6" stroke-width="2.0" stroke-dasharray="22,13,37,12,29,19,11,10,30,19,22,4,17,17,14,6" stroke-dashoffset="283"/><path d="M251.3,566.0 A638.0,1142.0 0 0 0 1425.8,566.0" stroke="rgb(26,26,26)" stroke-opacity="1.0" stroke-width="1.6" stroke-dasharray="41,14,30,5,43,17,38,15,26,8,33,22,17,8,31,6" stroke-dashoffset="90"/><path d="M248.7,567.9 A640.8,1146.9 0 0 0 1428.4,567.9" stroke="rgb(38,38,38)" stroke-opacity="0.6" stroke-width="1.6" stroke-dasharray="20,13,30,22,28,13,15,18,12,19,18,14,17,9,43,20" stroke-dashoffset="211"/><path d="M245.0,570.8 A644.9,1154.2 0 0 0 1432.1,570.8" stroke="rgb(26,26,26)" stroke-opacity="0.6" stroke-width="1.6" stroke-dasharray="20,13,17,18,18,18,20,22,27,14,16,14,36,4,41,21" stroke-dashoffset="193"/><path d="M242.1,573.0 A648.0,1159.9 0 0 0 1435.0,573.0" stroke="rgb(38,38,38)" stroke-opacity="0.6" stroke-width="1.6" stroke-dasharray="21,17,31,20,23,17,39,5,26,5,39,7,45,8,22,22" stroke-dashoffset="272"/><path d="M238.1,576.0 A652.3,1167.6 0 0 0 1439.0,576.0" stroke="rgb(26,26,26)" stroke-opacity="0.6" stroke-width="2.0" stroke-dasharray="34,9,40,18,21,19,23,7,33,9,37,11,15,4,40,8" stroke-dashoffset="180"/><path d="M234.5,578.7 A656.2,1174.5 0 0 0 1442.6,578.7" stroke="rgb(26,26,26)" stroke-opacity="1.0" stroke-width="1.6" stroke-dasharray="44,15,37,18,11,18,33,18,42,14,19,8,12,20,34,22" stroke-dashoffset="183"/><path d="M230.5,581.8 A660.6,1182.4 0 0 0 1446.6,581.8" stroke="rgb(34,34,34)" stroke-opacity="0.6" stroke-width="2.0" stroke-dasharray="24,15,11,6,30,11,33,7,29,8,13,22,34,14,21,9" stroke-dashoffset="53"/><path d="M226.6,584.7 A664.7,1189.8 0 0 0 1450.5,584.7" stroke="rgb(34,34,34)" stroke-opacity="0.6" stroke-width="2.0" stroke-dasharray="24,9,15,10,22,16,30,19,15,13,12,18,41,15,15,19" stroke-dashoffset="51"/><path d="M223.2,587.3 A668.5,1196.5 0 0 0 1453.9,587.3" stroke="rgb(26,26,26)" stroke-opacity="0.6" stroke-width="2.0" stroke-dasharray="43,7,20,14,22,11,17,18,29,18,14,22,30,10,15,17" stroke-dashoffset="261"/><path d="M220.4,589.4 A671.5,1201.9 0 0 0 1456.7,589.4" stroke="rgb(34,34,34)" stroke-opacity="1.0" stroke-width="2.0" stroke-dasharray="28,17,35,6,36,6,36,11,35,14,38,11,41,6,13,13" stroke-dashoffset="211"/><path d="M217.4,591.7 A674.8,1207.8 0 0 0 1459.7,591.7" stroke="rgb(26,26,26)" stroke-opacity="0.6" stroke-width="1.6" stroke-dasharray="44,13,33,4,39,5,31,22,41,16,15,12,13,4,28,13" stroke-dashoffset="80"/><path d="M213.5,594.7 A679.0,1215.4 0 0 0 1463.6,594.7" stroke="rgb(34,34,34)" stroke-opacity="1.0" stroke-width="2.0" stroke-dasharray="11,4,33,4,38,21,43,9,11,17,16,16,45,19,16,15" stroke-dashoffset="197"/><path d="M209.6,597.6 A683.2,1222.9 0 0 0 1467.5,597.6" stroke="rgb(30,30,30)" stroke-opacity="0.8" stroke-width="1.6" stroke-dasharray="19,13,39,21,43,20,13,21,45,5,40,8,34,4,20,22" stroke-dashoffset="138"/><path d="M205.9,600.5 A687.3,1230.2 0 0 0 1471.2,600.5" stroke="rgb(30,30,30)" stroke-opacity="0.8" stroke-width="1.6" stroke-dasharray="29,17,10,14,24,16,27,6,36,18,13,22,43,6,12,18" stroke-dashoffset="245"/><path d="M203.5,602.3 A689.9,1234.8 0 0 0 1473.6,602.3" stroke="rgb(30,30,30)" stroke-opacity="1.0" stroke-width="2.0" stroke-dasharray="34,18,17,18,18,12,45,20,17,9,31,16,36,20,40,20" stroke-dashoffset="222"/><path d="M199.3,605.5 A694.4,1242.9 0 0 0 1477.8,605.5" stroke="rgb(26,26,26)" stroke-opacity="0.6" stroke-width="2.0" stroke-dasharray="43,11,25,10,39,19,32,13,29,4,18,6,23,5,25,7" stroke-dashoffset="124"/><path d="M196.0,608.0 A698.0,1249.4 0 0 0 1481.1,608.0" stroke="rgb(38,38,38)" stroke-opacity="1.0" stroke-width="2.0" stroke-dasharray="38,12,40,8,32,20,27,20,30,8,19,12,23,9,24,7" stroke-dashoffset="19"/><path d="M192.6,610.6 A701.7,1256.0 0 0 0 1484.5,610.6" stroke="rgb(38,38,38)" stroke-opacity="0.6" stroke-width="1.6" stroke-dasharray="14,5,12,16,13,20,41,5,38,10,30,17,33,5,14,16" stroke-dashoffset="207"/><path d="M189.5,612.9 A705.1,1262.1 0 0 0 1487.6,612.9" stroke="rgb(34,34,34)" stroke-opacity="1.0" stroke-width="1.6" stroke-dasharray="45,7,20,4,35,11,24,8,24,17,18,4,21,13,21,15" stroke-dashoffset="42"/></g>
<g class="M" fill="none" filter="url(#b1)"><path d="M742.7,192.6 A104.1,186.4 0 0 0 934.4,192.6" stroke="rgb(210,210,210)" stroke-width="1.2" stroke-dasharray="23,25,55,5,62,18,58,19,71,6,78,30" stroke-dashoffset="236"/><path d="M738.3,196.0 A108.9,195.0 0 0 0 938.8,196.0" stroke="rgb(210,210,210)" stroke-width="2.0" stroke-dasharray="58,24,30,30,59,15,43,5,20,24,73,14" stroke-dashoffset="251"/><path d="M735.2,198.3 A112.3,200.9 0 0 0 941.9,198.3" stroke="rgb(210,210,210)" stroke-width="1.6" stroke-dasharray="22,28,58,10,49,24,45,26,20,21,40,15" stroke-dashoffset="31"/><path d="M731.9,200.8 A115.9,207.4 0 0 0 945.2,200.8" stroke="rgb(150,150,150)" stroke-width="1.6" stroke-dasharray="64,7,56,13,67,16,67,7,25,23,52,17" stroke-dashoffset="182"/><path d="M727.4,204.2 A120.7,216.1 0 0 0 949.7,204.2" stroke="rgb(190,190,190)" stroke-width="1.6" stroke-dasharray="63,10,56,20,39,11,40,4,53,13,46,26" stroke-dashoffset="149"/><path d="M722.1,208.2 A126.5,226.3 0 0 0 955.0,208.2" stroke="rgb(190,190,190)" stroke-width="2.0" stroke-dasharray="59,12,64,21,42,6,46,15,77,13,80,30" stroke-dashoffset="68"/><path d="M718.5,211.0 A130.4,233.5 0 0 0 958.6,211.0" stroke="rgb(150,150,150)" stroke-width="2.0" stroke-dasharray="42,8,35,27,26,30,73,21,69,23,30,30" stroke-dashoffset="290"/><path d="M714.6,214.0 A134.6,241.0 0 0 0 962.5,214.0" stroke="rgb(190,190,190)" stroke-width="1.2" stroke-dasharray="49,8,44,14,52,12,23,18,44,30,24,27" stroke-dashoffset="11"/><path d="M711.5,216.3 A138.0,247.1 0 0 0 965.6,216.3" stroke="rgb(190,190,190)" stroke-width="1.2" stroke-dasharray="39,18,58,17,40,25,77,21,33,27,78,26" stroke-dashoffset="129"/><path d="M707.1,219.7 A142.8,255.6 0 0 0 970.0,219.7" stroke="rgb(170,170,170)" stroke-width="1.2" stroke-dasharray="71,6,50,7,52,26,28,11,65,27,53,22" stroke-dashoffset="0"/><path d="M701.8,223.7 A148.5,265.8 0 0 0 975.3,223.7" stroke="rgb(150,150,150)" stroke-width="1.6" stroke-dasharray="69,30,66,19,74,18,51,4,48,26,37,5" stroke-dashoffset="269"/><path d="M697.2,227.2 A153.6,274.9 0 0 0 979.9,227.2" stroke="rgb(190,190,190)" stroke-width="1.6" stroke-dasharray="27,14,66,9,64,17,41,27,69,30,57,8" stroke-dashoffset="211"/><path d="M692.5,230.8 A158.7,284.0 0 0 0 984.6,230.8" stroke="rgb(150,150,150)" stroke-width="1.6" stroke-dasharray="38,15,25,28,45,15,33,10,78,4,26,6" stroke-dashoffset="249"/><path d="M689.5,233.0 A161.9,289.8 0 0 0 987.6,233.0" stroke="rgb(150,150,150)" stroke-width="1.2" stroke-dasharray="23,26,59,14,59,16,38,12,34,6,34,4" stroke-dashoffset="75"/><path d="M685.5,236.1 A166.3,297.7 0 0 0 991.6,236.1" stroke="rgb(150,150,150)" stroke-width="1.6" stroke-dasharray="46,17,43,21,80,14,39,30,32,21,47,7" stroke-dashoffset="237"/><path d="M681.0,239.5 A171.1,306.3 0 0 0 996.1,239.5" stroke="rgb(170,170,170)" stroke-width="1.6" stroke-dasharray="75,20,23,11,64,8,34,14,63,30,71,27" stroke-dashoffset="103"/><path d="M678.1,241.7 A174.3,312.0 0 0 0 999.0,241.7" stroke="rgb(150,150,150)" stroke-width="1.2" stroke-dasharray="51,7,79,10,54,19,23,30,43,10,24,9" stroke-dashoffset="151"/><path d="M672.8,245.8 A180.1,322.4 0 0 0 1004.3,245.8" stroke="rgb(150,150,150)" stroke-width="1.6" stroke-dasharray="42,6,75,15,22,10,80,17,35,23,74,25" stroke-dashoffset="115"/><path d="M668.6,248.9 A184.7,330.5 0 0 0 1008.5,248.9" stroke="rgb(190,190,190)" stroke-width="1.2" stroke-dasharray="23,8,48,7,71,27,36,18,72,7,35,22" stroke-dashoffset="201"/><path d="M664.3,252.2 A189.2,338.7 0 0 0 1012.8,252.2" stroke="rgb(170,170,170)" stroke-width="2.0" stroke-dasharray="44,21,35,26,48,8,64,19,34,10,27,19" stroke-dashoffset="144"/><path d="M658.6,256.5 A195.5,349.8 0 0 0 1018.5,256.5" stroke="rgb(170,170,170)" stroke-width="1.2" stroke-dasharray="52,26,42,17,75,5,53,7,23,24,74,18" stroke-dashoffset="199"/><path d="M656.0,258.5 A198.3,354.9 0 0 0 1021.1,258.5" stroke="rgb(210,210,210)" stroke-width="1.2" stroke-dasharray="48,21,33,4,35,8,50,6,42,29,74,23" stroke-dashoffset="243"/><path d="M650.4,262.7 A204.4,365.8 0 0 0 1026.7,262.7" stroke="rgb(190,190,190)" stroke-width="1.6" stroke-dasharray="20,8,38,8,21,23,36,24,77,29,72,23" stroke-dashoffset="70"/><path d="M647.5,264.9 A207.5,371.4 0 0 0 1029.6,264.9" stroke="rgb(170,170,170)" stroke-width="1.6" stroke-dasharray="51,20,21,24,75,9,63,29,62,19,76,9" stroke-dashoffset="252"/><path d="M644.0,267.6 A211.4,378.3 0 0 0 1033.1,267.6" stroke="rgb(190,190,190)" stroke-width="1.6" stroke-dasharray="23,18,68,18,50,18,28,13,37,17,69,13" stroke-dashoffset="98"/><path d="M639.5,271.0 A216.2,387.0 0 0 0 1037.6,271.0" stroke="rgb(150,150,150)" stroke-width="1.6" stroke-dasharray="24,25,76,22,52,23,29,21,56,21,24,15" stroke-dashoffset="236"/><path d="M635.5,274.1 A220.6,394.8 0 0 0 1041.6,274.1" stroke="rgb(170,170,170)" stroke-width="2.0" stroke-dasharray="33,27,25,16,49,20,48,29,23,29,27,22" stroke-dashoffset="208"/><path d="M631.6,277.0 A224.8,402.4 0 0 0 1045.5,277.0" stroke="rgb(210,210,210)" stroke-width="2.0" stroke-dasharray="24,8,27,20,25,24,47,7,28,7,72,6" stroke-dashoffset="37"/><path d="M626.9,280.6 A229.9,411.5 0 0 0 1050.2,280.6" stroke="rgb(170,170,170)" stroke-width="1.6" stroke-dasharray="72,12,78,30,59,22,80,24,56,24,54,5" stroke-dashoffset="11"/><path d="M623.1,283.5 A234.1,419.0 0 0 0 1054.0,283.5" stroke="rgb(170,170,170)" stroke-width="1.6" stroke-dasharray="74,27,80,8,57,6,36,9,22,10,55,15" stroke-dashoffset="209"/><path d="M620.0,285.9 A237.5,425.0 0 0 0 1057.1,285.9" stroke="rgb(190,190,190)" stroke-width="1.2" stroke-dasharray="21,17,21,6,71,30,75,16,29,24,20,15" stroke-dashoffset="295"/><path d="M617.0,288.2 A240.7,430.9 0 0 0 1060.1,288.2" stroke="rgb(190,190,190)" stroke-width="1.2" stroke-dasharray="32,27,53,12,66,23,55,13,36,28,32,12" stroke-dashoffset="108"/><path d="M611.4,292.4 A246.8,441.8 0 0 0 1065.7,292.4" stroke="rgb(170,170,170)" stroke-width="1.2" stroke-dasharray="57,4,36,29,61,5,39,27,27,28,22,22" stroke-dashoffset="126"/><path d="M608.6,294.5 A249.8,447.1 0 0 0 1068.5,294.5" stroke="rgb(170,170,170)" stroke-width="2.0" stroke-dasharray="69,25,29,28,49,12,32,15,76,4,73,24" stroke-dashoffset="88"/><path d="M605.4,296.9 A253.2,453.3 0 0 0 1071.7,296.9" stroke="rgb(150,150,150)" stroke-width="1.2" stroke-dasharray="59,14,26,16,58,22,38,11,61,16,75,9" stroke-dashoffset="115"/><path d="M601.8,299.7 A257.2,460.3 0 0 0 1075.3,299.7" stroke="rgb(170,170,170)" stroke-width="1.6" stroke-dasharray="47,8,74,29,55,13,53,23,72,21,22,25" stroke-dashoffset="87"/><path d="M599.0,301.8 A260.2,465.8 0 0 0 1078.1,301.8" stroke="rgb(170,170,170)" stroke-width="2.0" stroke-dasharray="48,13,76,7,80,13,21,22,45,20,79,18" stroke-dashoffset="241"/><path d="M596.3,303.8 A263.1,471.0 0 0 0 1080.8,303.8" stroke="rgb(210,210,210)" stroke-width="1.6" stroke-dasharray="34,25,37,30,32,4,32,25,25,9,53,26" stroke-dashoffset="88"/><path d="M591.9,307.2 A268.0,479.7 0 0 0 1085.2,307.2" stroke="rgb(170,170,170)" stroke-width="1.6" stroke-dasharray="38,20,49,20,64,20,33,12,66,7,57,13" stroke-dashoffset="137"/><path d="M588.4,309.8 A271.7,486.3 0 0 0 1088.7,309.8" stroke="rgb(190,190,190)" stroke-width="2.0" stroke-dasharray="68,17,51,27,77,27,55,9,42,8,52,19" stroke-dashoffset="265"/><path d="M585.5,312.0 A274.9,492.0 0 0 0 1091.6,312.0" stroke="rgb(210,210,210)" stroke-width="2.0" stroke-dasharray="48,6,27,4,40,22,68,26,74,23,34,29" stroke-dashoffset="223"/><path d="M580.3,316.0 A280.5,502.1 0 0 0 1096.8,316.0" stroke="rgb(210,210,210)" stroke-width="1.6" stroke-dasharray="63,21,43,25,74,21,37,6,75,25,55,26" stroke-dashoffset="25"/><path d="M574.7,320.3 A286.7,513.1 0 0 0 1102.4,320.3" stroke="rgb(170,170,170)" stroke-width="1.2" stroke-dasharray="50,27,30,16,52,23,42,13,30,4,76,8" stroke-dashoffset="90"/><path d="M570.4,323.6 A291.3,521.5 0 0 0 1106.7,323.6" stroke="rgb(170,170,170)" stroke-width="1.6" stroke-dasharray="34,13,25,24,74,18,20,21,32,18,24,24" stroke-dashoffset="235"/><path d="M566.7,326.3 A295.3,528.5 0 0 0 1110.4,326.3" stroke="rgb(190,190,190)" stroke-width="1.2" stroke-dasharray="38,29,27,23,54,19,72,21,20,29,56,23" stroke-dashoffset="217"/><path d="M561.1,330.6 A301.4,539.4 0 0 0 1116.0,330.6" stroke="rgb(190,190,190)" stroke-width="1.6" stroke-dasharray="58,25,37,14,55,20,75,22,22,24,35,19" stroke-dashoffset="176"/><path d="M558.2,332.8 A304.6,545.1 0 0 0 1118.9,332.8" stroke="rgb(170,170,170)" stroke-width="2.0" stroke-dasharray="34,10,48,11,47,15,58,12,49,23,60,19" stroke-dashoffset="90"/><path d="M552.5,337.1 A310.7,556.2 0 0 0 1124.6,337.1" stroke="rgb(210,210,210)" stroke-width="1.6" stroke-dasharray="54,26,41,15,36,17,65,17,51,25,36,23" stroke-dashoffset="135"/><path d="M548.8,339.9 A314.8,563.4 0 0 0 1128.3,339.9" stroke="rgb(190,190,190)" stroke-width="1.2" stroke-dasharray="47,22,29,20,78,21,47,21,34,8,67,10" stroke-dashoffset="47"/><path d="M546.4,341.8 A317.4,568.2 0 0 0 1130.7,341.8" stroke="rgb(190,190,190)" stroke-width="1.2" stroke-dasharray="23,30,78,12,21,29,31,19,26,30,49,4" stroke-dashoffset="84"/><path d="M541.7,345.4 A322.5,577.3 0 0 0 1135.4,345.4" stroke="rgb(170,170,170)" stroke-width="1.6" stroke-dasharray="45,14,50,19,72,23,61,27,74,11,57,7" stroke-dashoffset="17"/><path d="M538.0,348.1 A326.5,584.4 0 0 0 1139.1,348.1" stroke="rgb(190,190,190)" stroke-width="1.2" stroke-dasharray="50,27,27,17,79,17,50,11,32,9,51,28" stroke-dashoffset="248"/><path d="M533.7,351.5 A331.2,592.9 0 0 0 1143.4,351.5" stroke="rgb(190,190,190)" stroke-width="1.2" stroke-dasharray="25,23,35,5,31,14,52,16,64,7,34,4" stroke-dashoffset="300"/><path d="M530.1,354.1 A335.0,599.7 0 0 0 1147.0,354.1" stroke="rgb(150,150,150)" stroke-width="1.2" stroke-dasharray="50,18,32,20,60,9,36,6,67,24,26,5" stroke-dashoffset="56"/><path d="M525.9,357.3 A339.6,607.9 0 0 0 1151.2,357.3" stroke="rgb(210,210,210)" stroke-width="2.0" stroke-dasharray="32,12,70,28,57,18,40,8,49,25,75,21" stroke-dashoffset="118"/><path d="M521.7,360.5 A344.2,616.1 0 0 0 1155.4,360.5" stroke="rgb(170,170,170)" stroke-width="1.2" stroke-dasharray="64,28,73,17,70,20,35,4,69,30,26,8" stroke-dashoffset="42"/><path d="M517.2,363.9 A349.1,624.8 0 0 0 1159.9,363.9" stroke="rgb(210,210,210)" stroke-width="1.6" stroke-dasharray="36,13,20,15,47,30,66,25,48,12,69,4" stroke-dashoffset="252"/><path d="M514.4,366.1 A352.1,630.3 0 0 0 1162.7,366.1" stroke="rgb(190,190,190)" stroke-width="1.2" stroke-dasharray="62,28,78,14,64,17,40,6,53,30,42,16" stroke-dashoffset="112"/><path d="M509.4,369.9 A357.6,640.1 0 0 0 1167.7,369.9" stroke="rgb(210,210,210)" stroke-width="2.0" stroke-dasharray="39,20,73,8,49,27,57,12,76,16,21,11" stroke-dashoffset="163"/><path d="M504.7,373.5 A362.7,649.2 0 0 0 1172.4,373.5" stroke="rgb(210,210,210)" stroke-width="2.0" stroke-dasharray="47,20,70,15,55,26,26,19,51,23,36,28" stroke-dashoffset="152"/><path d="M500.7,376.5 A367.1,657.0 0 0 0 1176.4,376.5" stroke="rgb(190,190,190)" stroke-width="1.6" stroke-dasharray="67,15,29,22,60,7,45,11,74,8,67,4" stroke-dashoffset="69"/><path d="M495.8,380.2 A372.3,666.4 0 0 0 1181.3,380.2" stroke="rgb(170,170,170)" stroke-width="1.6" stroke-dasharray="68,27,51,25,30,5,55,28,49,6,48,11" stroke-dashoffset="10"/><path d="M491.7,383.3 A376.8,674.4 0 0 0 1185.4,383.3" stroke="rgb(210,210,210)" stroke-width="1.6" stroke-dasharray="71,22,58,9,53,20,31,11,24,28,32,13" stroke-dashoffset="268"/><path d="M487.9,386.2 A380.9,681.8 0 0 0 1189.2,386.2" stroke="rgb(170,170,170)" stroke-width="2.0" stroke-dasharray="60,22,57,24,50,17,49,30,73,21,43,10" stroke-dashoffset="42"/><path d="M485.2,388.3 A383.9,687.1 0 0 0 1191.9,388.3" stroke="rgb(190,190,190)" stroke-width="2.0" stroke-dasharray="62,13,35,24,59,8,55,17,58,15,47,11" stroke-dashoffset="88"/><path d="M482.8,390.1 A386.5,691.8 0 0 0 1194.3,390.1" stroke="rgb(210,210,210)" stroke-width="1.6" stroke-dasharray="28,14,49,14,52,18,24,17,56,24,77,28" stroke-dashoffset="10"/><path d="M478.1,393.7 A391.6,700.9 0 0 0 1199.0,393.7" stroke="rgb(190,190,190)" stroke-width="1.6" stroke-dasharray="53,24,38,14,33,30,37,17,34,21,71,20" stroke-dashoffset="219"/><path d="M475.7,395.5 A394.2,705.6 0 0 0 1201.4,395.5" stroke="rgb(150,150,150)" stroke-width="2.0" stroke-dasharray="37,24,50,21,80,29,28,6,77,6,70,25" stroke-dashoffset="143"/><path d="M470.3,399.6 A400.0,716.0 0 0 0 1206.8,399.6" stroke="rgb(210,210,210)" stroke-width="1.2" stroke-dasharray="24,13,42,24,63,20,72,23,73,9,77,20" stroke-dashoffset="48"/><path d="M466.3,402.7 A404.4,723.9 0 0 0 1210.8,402.7" stroke="rgb(210,210,210)" stroke-width="1.6" stroke-dasharray="72,27,38,25,62,8,48,12,69,5,57,23" stroke-dashoffset="300"/><path d="M460.7,406.9 A410.5,734.7 0 0 0 1216.4,406.9" stroke="rgb(210,210,210)" stroke-width="1.2" stroke-dasharray="66,6,56,22,75,9,53,13,67,21,24,23" stroke-dashoffset="188"/><path d="M455.0,411.2 A416.7,745.8 0 0 0 1222.1,411.2" stroke="rgb(210,210,210)" stroke-width="1.2" stroke-dasharray="41,18,34,10,75,28,53,24,28,23,55,12" stroke-dashoffset="130"/><path d="M451.0,414.2 A421.0,753.5 0 0 0 1226.1,414.2" stroke="rgb(210,210,210)" stroke-width="2.0" stroke-dasharray="42,21,57,17,29,27,36,10,27,16,21,24" stroke-dashoffset="268"/><path d="M446.3,417.8 A426.2,762.8 0 0 0 1230.8,417.8" stroke="rgb(170,170,170)" stroke-width="1.6" stroke-dasharray="72,8,58,15,62,14,38,25,77,15,67,26" stroke-dashoffset="124"/><path d="M441.6,421.4 A431.3,771.9 0 0 0 1235.5,421.4" stroke="rgb(170,170,170)" stroke-width="1.2" stroke-dasharray="31,6,66,7,29,13,44,15,44,11,41,13" stroke-dashoffset="185"/><path d="M438.7,423.6 A434.4,777.6 0 0 0 1238.4,423.6" stroke="rgb(210,210,210)" stroke-width="1.6" stroke-dasharray="62,6,38,29,70,15,36,26,31,17,79,10" stroke-dashoffset="53"/><path d="M433.2,427.8 A440.4,788.2 0 0 0 1243.9,427.8" stroke="rgb(150,150,150)" stroke-width="1.6" stroke-dasharray="79,18,46,9,57,18,24,4,43,22,40,16" stroke-dashoffset="184"/><path d="M430.5,429.8 A443.2,793.4 0 0 0 1246.6,429.8" stroke="rgb(210,210,210)" stroke-width="2.0" stroke-dasharray="47,4,51,27,73,5,60,6,29,25,40,11" stroke-dashoffset="79"/><path d="M424.9,434.0 A449.3,804.2 0 0 0 1252.2,434.0" stroke="rgb(190,190,190)" stroke-width="2.0" stroke-dasharray="48,11,37,20,39,14,42,14,35,5,54,27" stroke-dashoffset="40"/><path d="M420.1,437.7 A454.6,813.6 0 0 0 1257.0,437.7" stroke="rgb(170,170,170)" stroke-width="1.6" stroke-dasharray="51,30,64,26,63,6,59,5,60,9,44,13" stroke-dashoffset="119"/><path d="M416.8,440.3 A458.2,820.2 0 0 0 1260.3,440.3" stroke="rgb(150,150,150)" stroke-width="2.0" stroke-dasharray="27,15,21,25,53,28,68,9,63,7,79,27" stroke-dashoffset="248"/><path d="M413.9,442.4 A461.3,825.7 0 0 0 1263.2,442.4" stroke="rgb(150,150,150)" stroke-width="1.6" stroke-dasharray="51,9,39,17,70,20,52,26,53,13,43,13" stroke-dashoffset="14"/><path d="M410.9,444.7 A464.6,831.6 0 0 0 1266.2,444.7" stroke="rgb(190,190,190)" stroke-width="2.0" stroke-dasharray="26,24,47,20,54,8,65,6,49,12,47,21" stroke-dashoffset="69"/><path d="M408.0,446.9 A467.8,837.3 0 0 0 1269.1,446.9" stroke="rgb(210,210,210)" stroke-width="1.6" stroke-dasharray="26,9,80,24,49,18,63,21,22,4,38,22" stroke-dashoffset="57"/><path d="M404.5,449.6 A471.6,844.0 0 0 0 1272.6,449.6" stroke="rgb(210,210,210)" stroke-width="1.6" stroke-dasharray="35,29,40,20,68,13,41,16,49,4,43,5" stroke-dashoffset="18"/><path d="M400.3,452.8 A476.1,852.2 0 0 0 1276.8,452.8" stroke="rgb(190,190,190)" stroke-width="1.6" stroke-dasharray="80,5,54,29,63,7,56,17,70,23,60,17" stroke-dashoffset="49"/><path d="M395.7,456.3 A481.1,861.2 0 0 0 1281.4,456.3" stroke="rgb(210,210,210)" stroke-width="2.0" stroke-dasharray="33,30,51,19,47,11,53,30,23,26,35,27" stroke-dashoffset="85"/><path d="M392.2,459.0 A484.9,868.0 0 0 0 1284.9,459.0" stroke="rgb(170,170,170)" stroke-width="1.6" stroke-dasharray="52,28,52,27,44,16,45,28,68,18,21,26" stroke-dashoffset="239"/><path d="M386.7,463.1 A490.8,878.5 0 0 0 1290.4,463.1" stroke="rgb(190,190,190)" stroke-width="2.0" stroke-dasharray="64,27,29,6,52,23,64,18,25,25,22,29" stroke-dashoffset="251"/><path d="M384.2,465.0 A493.6,883.5 0 0 0 1292.9,465.0" stroke="rgb(170,170,170)" stroke-width="1.6" stroke-dasharray="77,9,40,10,78,29,51,20,22,23,65,30" stroke-dashoffset="199"/><path d="M378.6,469.3 A499.7,894.4 0 0 0 1298.5,469.3" stroke="rgb(150,150,150)" stroke-width="2.0" stroke-dasharray="31,20,31,18,33,9,49,12,51,9,75,9" stroke-dashoffset="162"/><path d="M376.0,471.2 A502.5,899.4 0 0 0 1301.1,471.2" stroke="rgb(150,150,150)" stroke-width="1.6" stroke-dasharray="33,12,66,25,47,18,29,7,61,21,49,27" stroke-dashoffset="157"/><path d="M371.1,474.9 A507.8,908.9 0 0 0 1306.0,474.9" stroke="rgb(150,150,150)" stroke-width="1.6" stroke-dasharray="67,25,58,5,27,9,67,13,31,5,71,25" stroke-dashoffset="92"/><path d="M366.3,478.6 A513.0,918.3 0 0 0 1310.8,478.6" stroke="rgb(210,210,210)" stroke-width="2.0" stroke-dasharray="56,7,60,5,44,17,27,25,60,26,34,12" stroke-dashoffset="41"/><path d="M361.2,482.5 A518.6,928.2 0 0 0 1315.9,482.5" stroke="rgb(170,170,170)" stroke-width="1.6" stroke-dasharray="44,28,50,4,73,9,79,14,73,5,67,9" stroke-dashoffset="192"/><path d="M357.9,485.0 A522.1,934.6 0 0 0 1319.2,485.0" stroke="rgb(210,210,210)" stroke-width="2.0" stroke-dasharray="24,18,74,6,36,7,56,30,25,22,67,27" stroke-dashoffset="289"/><path d="M353.9,488.0 A526.5,942.3 0 0 0 1323.2,488.0" stroke="rgb(210,210,210)" stroke-width="1.6" stroke-dasharray="20,18,46,18,31,24,70,14,57,18,80,8" stroke-dashoffset="139"/><path d="M348.6,492.0 A532.3,952.7 0 0 0 1328.5,492.0" stroke="rgb(170,170,170)" stroke-width="2.0" stroke-dasharray="42,28,21,13,58,18,59,25,55,27,53,28" stroke-dashoffset="112"/><path d="M343.8,495.7 A537.5,962.0 0 0 0 1333.3,495.7" stroke="rgb(150,150,150)" stroke-width="2.0" stroke-dasharray="33,12,43,27,38,21,25,14,80,5,79,29" stroke-dashoffset="71"/><path d="M340.5,498.2 A541.1,968.5 0 0 0 1336.6,498.2" stroke="rgb(150,150,150)" stroke-width="2.0" stroke-dasharray="49,4,39,19,72,10,60,4,42,18,47,5" stroke-dashoffset="109"/><path d="M336.0,501.6 A545.9,977.1 0 0 0 1341.1,501.6" stroke="rgb(170,170,170)" stroke-width="2.0" stroke-dasharray="58,21,54,6,51,21,48,20,25,13,28,11" stroke-dashoffset="284"/><path d="M332.0,504.6 A550.3,984.9 0 0 0 1345.1,504.6" stroke="rgb(210,210,210)" stroke-width="2.0" stroke-dasharray="43,19,57,25,37,10,58,17,36,15,67,10" stroke-dashoffset="258"/><path d="M327.9,507.8 A554.8,993.0 0 0 0 1349.2,507.8" stroke="rgb(150,150,150)" stroke-width="2.0" stroke-dasharray="78,28,39,29,40,15,20,12,42,24,28,8" stroke-dashoffset="90"/><path d="M323.3,511.3 A559.8,1001.9 0 0 0 1353.8,511.3" stroke="rgb(210,210,210)" stroke-width="1.6" stroke-dasharray="44,28,78,20,71,21,51,14,43,14,23,11" stroke-dashoffset="56"/><path d="M319.9,513.9 A563.5,1008.5 0 0 0 1357.2,513.9" stroke="rgb(190,190,190)" stroke-width="1.2" stroke-dasharray="20,17,39,16,55,28,33,18,74,6,39,19" stroke-dashoffset="29"/><path d="M314.3,518.1 A569.5,1019.4 0 0 0 1362.8,518.1" stroke="rgb(190,190,190)" stroke-width="1.2" stroke-dasharray="41,7,63,23,25,24,25,27,25,18,70,9" stroke-dashoffset="271"/><path d="M310.9,520.7 A573.2,1026.0 0 0 0 1366.2,520.7" stroke="rgb(150,150,150)" stroke-width="1.6" stroke-dasharray="27,20,24,29,33,24,50,22,75,9,58,8" stroke-dashoffset="299"/><path d="M307.1,523.6 A577.4,1033.5 0 0 0 1370.0,523.6" stroke="rgb(170,170,170)" stroke-width="2.0" stroke-dasharray="38,27,59,5,45,28,27,7,24,7,50,17" stroke-dashoffset="112"/><path d="M302.7,526.9 A582.1,1041.9 0 0 0 1374.4,526.9" stroke="rgb(150,150,150)" stroke-width="1.2" stroke-dasharray="33,16,29,15,70,8,55,26,80,15,20,23" stroke-dashoffset="245"/><path d="M298.9,529.8 A586.2,1049.3 0 0 0 1378.2,529.8" stroke="rgb(190,190,190)" stroke-width="1.2" stroke-dasharray="42,5,79,22,59,18,32,16,49,8,20,27" stroke-dashoffset="263"/><path d="M295.5,532.4 A590.0,1056.0 0 0 0 1381.6,532.4" stroke="rgb(210,210,210)" stroke-width="2.0" stroke-dasharray="45,20,64,21,57,10,51,22,69,13,45,26" stroke-dashoffset="26"/><path d="M291.6,535.4 A594.2,1063.6 0 0 0 1385.5,535.4" stroke="rgb(170,170,170)" stroke-width="2.0" stroke-dasharray="31,16,38,24,22,7,61,17,34,26,46,6" stroke-dashoffset="233"/><path d="M288.5,537.7 A597.5,1069.5 0 0 0 1388.6,537.7" stroke="rgb(170,170,170)" stroke-width="1.6" stroke-dasharray="31,21,36,24,60,8,56,11,20,23,32,11" stroke-dashoffset="14"/><path d="M283.4,541.6 A603.0,1079.4 0 0 0 1393.7,541.6" stroke="rgb(210,210,210)" stroke-width="1.2" stroke-dasharray="74,10,70,13,63,23,55,23,52,24,37,21" stroke-dashoffset="119"/><path d="M279.4,544.6 A607.4,1087.2 0 0 0 1397.7,544.6" stroke="rgb(210,210,210)" stroke-width="1.6" stroke-dasharray="36,5,38,22,49,6,61,8,37,8,48,20" stroke-dashoffset="2"/><path d="M275.6,547.5 A611.6,1094.7 0 0 0 1401.5,547.5" stroke="rgb(170,170,170)" stroke-width="2.0" stroke-dasharray="31,13,69,6,73,11,50,4,20,18,59,19" stroke-dashoffset="163"/><path d="M270.1,551.7 A617.6,1105.4 0 0 0 1407.0,551.7" stroke="rgb(170,170,170)" stroke-width="1.6" stroke-dasharray="76,10,51,29,49,15,78,28,41,28,27,15" stroke-dashoffset="72"/><path d="M265.0,555.6 A623.1,1115.3 0 0 0 1412.1,555.6" stroke="rgb(150,150,150)" stroke-width="2.0" stroke-dasharray="72,17,47,7,38,26,21,12,50,19,70,29" stroke-dashoffset="21"/><path d="M261.3,558.3 A627.1,1122.4 0 0 0 1415.8,558.3" stroke="rgb(190,190,190)" stroke-width="1.2" stroke-dasharray="50,27,20,26,50,23,71,25,79,21,49,21" stroke-dashoffset="187"/><path d="M258.3,560.7 A630.4,1128.3 0 0 0 1418.8,560.7" stroke="rgb(210,210,210)" stroke-width="2.0" stroke-dasharray="52,22,39,11,65,15,60,19,20,14,33,9" stroke-dashoffset="202"/><path d="M253.5,564.3 A635.6,1137.6 0 0 0 1423.6,564.3" stroke="rgb(190,190,190)" stroke-width="2.0" stroke-dasharray="42,7,79,26,44,14,25,21,59,18,59,30" stroke-dashoffset="82"/><path d="M248.2,568.4 A641.4,1148.0 0 0 0 1428.9,568.4" stroke="rgb(210,210,210)" stroke-width="1.2" stroke-dasharray="47,12,72,25,50,29,80,6,33,5,34,16" stroke-dashoffset="115"/><path d="M243.3,572.0 A646.6,1157.4 0 0 0 1433.8,572.0" stroke="rgb(190,190,190)" stroke-width="2.0" stroke-dasharray="57,25,79,24,25,6,23,13,28,23,21,28" stroke-dashoffset="249"/><path d="M239.9,574.6 A650.3,1164.0 0 0 0 1437.2,574.6" stroke="rgb(190,190,190)" stroke-width="1.2" stroke-dasharray="77,8,70,9,53,7,73,24,39,27,37,20" stroke-dashoffset="143"/><path d="M234.3,578.9 A656.4,1174.9 0 0 0 1442.8,578.9" stroke="rgb(170,170,170)" stroke-width="1.2" stroke-dasharray="38,12,63,22,59,14,43,8,23,6,44,25" stroke-dashoffset="236"/><path d="M229.0,582.9 A662.2,1185.2 0 0 0 1448.1,582.9" stroke="rgb(170,170,170)" stroke-width="1.6" stroke-dasharray="22,12,43,6,54,25,71,6,21,27,75,21" stroke-dashoffset="175"/><path d="M223.6,587.0 A668.1,1195.8 0 0 0 1453.5,587.0" stroke="rgb(190,190,190)" stroke-width="2.0" stroke-dasharray="52,5,52,6,70,24,80,8,54,10,49,5" stroke-dashoffset="122"/><path d="M219.4,590.2 A672.6,1204.0 0 0 0 1457.7,590.2" stroke="rgb(210,210,210)" stroke-width="1.6" stroke-dasharray="58,10,25,22,40,27,64,6,76,6,23,14" stroke-dashoffset="93"/><path d="M215.1,593.5 A677.3,1212.4 0 0 0 1462.0,593.5" stroke="rgb(170,170,170)" stroke-width="2.0" stroke-dasharray="57,6,20,24,24,30,60,23,78,8,52,23" stroke-dashoffset="186"/><path d="M209.8,597.5 A683.1,1222.6 0 0 0 1467.3,597.5" stroke="rgb(150,150,150)" stroke-width="1.6" stroke-dasharray="73,8,63,8,34,18,33,6,55,11,20,26" stroke-dashoffset="182"/><path d="M204.4,601.6 A688.9,1233.1 0 0 0 1472.7,601.6" stroke="rgb(170,170,170)" stroke-width="1.2" stroke-dasharray="28,7,37,11,53,19,23,7,69,26,65,7" stroke-dashoffset="206"/><path d="M200.2,604.8 A693.4,1241.2 0 0 0 1476.9,604.8" stroke="rgb(170,170,170)" stroke-width="1.2" stroke-dasharray="25,5,38,18,53,21,48,24,74,16,41,28" stroke-dashoffset="179"/><path d="M195.4,608.5 A698.7,1250.7 0 0 0 1481.7,608.5" stroke="rgb(210,210,210)" stroke-width="1.2" stroke-dasharray="43,5,33,4,32,15,46,19,73,24,48,23" stroke-dashoffset="113"/><path d="M191.0,611.8 A703.5,1259.1 0 0 0 1486.1,611.8" stroke="rgb(150,150,150)" stroke-width="1.6" stroke-dasharray="36,30,46,18,66,12,25,27,49,10,36,7" stroke-dashoffset="148"/><path d="M188.5,613.7 A706.2,1263.9 0 0 0 1488.6,613.7" stroke="rgb(150,150,150)" stroke-width="1.2" stroke-dasharray="42,22,44,5,33,11,74,12,63,9,68,30" stroke-dashoffset="79"/></g>
<path class="L" d="M591.9,335.1 L594.2,343.3 L596.6,351.4 L599.0,359.4 L601.5,367.4 L604.2,375.2 L606.9,383.0 L609.6,390.7 L612.5,398.2 L615.4,405.7 L618.4,413.1 L621.5,420.4 L624.7,427.6 L627.9,434.6 L631.2,441.6 L634.6,448.5 L638.1,455.2 L641.6,461.8 L645.2,468.3 L648.9,474.7 L652.6,481.0 L656.4,487.1 L660.2,493.1 L664.1,499.0 L668.1,504.7 L672.1,510.3 L676.2,515.8 L680.4,521.2 L684.6,526.4 L688.8,531.4 L693.1,536.3 L697.5,541.1 L701.9,545.7 L706.4,550.2 L710.9,554.5 L715.4,558.7 L720.0,562.7 L724.6,566.6 L729.3,570.3 L734.0,573.9 L738.7,577.3 L743.5,580.6 L748.3,583.6 L753.1,586.6 L758.0,589.3 L762.9,591.9 L767.8,594.4 L772.8,596.6 L777.8,598.8 L782.7,600.7 L787.8,602.5 L792.8,604.1 L797.8,605.5 L802.9,606.8 L808.0,607.9 L813.0,608.8 L818.1,609.6 L823.2,610.2 L828.3,610.6 L833.4,610.9 L838.5,611.0 L843.7,610.9 L848.8,610.6 L853.9,610.2 L859.0,609.6 L864.1,608.8 L869.1,607.9 L874.2,606.8 L879.3,605.5 L884.3,604.1 L889.3,602.5 L894.4,600.7 L899.3,598.8 L904.3,596.6 L909.3,594.4 L914.2,591.9 L919.1,589.3 L924.0,586.6 L928.8,583.6 L933.6,580.6 L938.4,577.3 L943.1,573.9 L947.8,570.3 L952.5,566.6 L957.1,562.7 L961.7,558.7 L966.2,554.5 L970.7,550.2 L975.2,545.7 L979.6,541.1 L984.0,536.3 L988.3,531.4 L992.5,526.4 L996.7,521.2 L1000.9,515.8 L1005.0,510.3 L1009.0,504.7 L1013.0,499.0 L1016.9,493.1 L1020.7,487.1 L1024.5,481.0 L1028.2,474.7 L1031.9,468.3 L1035.5,461.8 L1039.0,455.2 L1042.5,448.5 L1045.9,441.6 L1049.2,434.6 L1052.4,427.6 L1055.6,420.4 L1058.7,413.1 L1061.7,405.7 L1064.6,398.2 L1067.5,390.7 L1070.2,383.0 L1072.9,375.2 L1075.6,367.4 L1078.1,359.4 L1080.5,351.4 L1082.9,343.3 L1085.2,335.1" fill="none" stroke="rgb(78,78,78)" stroke-width="8" stroke-linecap="round" stroke-linejoin="round" filter="url(#b2)"/>
<path class="L" d="M591.9,335.1 L594.2,343.3 L596.6,351.4 L599.0,359.4 L601.5,367.4 L604.2,375.2 L606.9,383.0 L609.6,390.7 L612.5,398.2 L615.4,405.7 L618.4,413.1 L621.5,420.4 L624.7,427.6 L627.9,434.6 L631.2,441.6 L634.6,448.5 L638.1,455.2 L641.6,461.8 L645.2,468.3 L648.9,474.7 L652.6,481.0 L656.4,487.1 L660.2,493.1 L664.1,499.0 L668.1,504.7 L672.1,510.3 L676.2,515.8 L680.4,521.2 L684.6,526.4 L688.8,531.4 L693.1,536.3 L697.5,541.1 L701.9,545.7 L706.4,550.2 L710.9,554.5 L715.4,558.7 L720.0,562.7 L724.6,566.6 L729.3,570.3 L734.0,573.9 L738.7,577.3 L743.5,580.6 L748.3,583.6 L753.1,586.6 L758.0,589.3 L762.9,591.9 L767.8,594.4 L772.8,596.6 L777.8,598.8 L782.7,600.7 L787.8,602.5 L792.8,604.1 L797.8,605.5 L802.9,606.8 L808.0,607.9 L813.0,608.8 L818.1,609.6 L823.2,610.2 L828.3,610.6 L833.4,610.9 L838.5,611.0 L843.7,610.9 L848.8,610.6 L853.9,610.2 L859.0,609.6 L864.1,608.8 L869.1,607.9 L874.2,606.8 L879.3,605.5 L884.3,604.1 L889.3,602.5 L894.4,600.7 L899.3,598.8 L904.3,596.6 L909.3,594.4 L914.2,591.9 L919.1,589.3 L924.0,586.6 L928.8,583.6 L933.6,580.6 L938.4,577.3 L943.1,573.9 L947.8,570.3 L952.5,566.6 L957.1,562.7 L961.7,558.7 L966.2,554.5 L970.7,550.2 L975.2,545.7 L979.6,541.1 L984.0,536.3 L988.3,531.4 L992.5,526.4 L996.7,521.2 L1000.9,515.8 L1005.0,510.3 L1009.0,504.7 L1013.0,499.0 L1016.9,493.1 L1020.7,487.1 L1024.5,481.0 L1028.2,474.7 L1031.9,468.3 L1035.5,461.8 L1039.0,455.2 L1042.5,448.5 L1045.9,441.6 L1049.2,434.6 L1052.4,427.6 L1055.6,420.4 L1058.7,413.1 L1061.7,405.7 L1064.6,398.2 L1067.5,390.7 L1070.2,383.0 L1072.9,375.2 L1075.6,367.4 L1078.1,359.4 L1080.5,351.4 L1082.9,343.3 L1085.2,335.1" fill="none" stroke="rgb(128,128,128)" stroke-width="3" stroke-linecap="round" stroke-linejoin="round" filter="url(#b1)"/>
<path class="L" d="M735.4,576.9 L738.5,579.1 L741.6,581.3 L744.8,583.4 L748.0,585.4 L751.1,587.4 L754.3,589.2 L757.6,591.0 L760.8,592.8 L764.0,594.4 L767.3,596.0 L770.5,597.6 L773.8,599.0 L777.1,600.4 L780.3,601.7 L783.6,602.9 L786.9,604.1 L790.2,605.2 L793.6,606.2 L796.9,607.2 L800.2,608.0" fill="none" stroke="rgb(150,150,150)" stroke-width="5" stroke-linecap="round" stroke-linejoin="round" filter="url(#b2)"/>
<path class="L" d="M781.3,602.1 L784.4,603.2 L787.6,604.3 L790.7,605.3 L793.9,606.3 L797.0,607.2 L800.2,608.0 L803.4,608.8 L806.6,609.5 L809.8,610.1 L812.9,610.7 L816.1,611.2 L819.3,611.6 L822.5,612.0 L825.7,612.3 L828.9,612.5 L832.1,612.7 L835.3,612.8 L838.5,612.8 L841.8,612.8 L845.0,612.7 L848.2,612.5 L851.4,612.3 L854.6,612.0 L857.8,611.6 L861.0,611.2 L864.2,610.7 L867.3,610.1 L870.5,609.5 L873.7,608.8 L876.9,608.0" fill="none" stroke="rgb(185,185,185)" stroke-width="5" stroke-linecap="round" stroke-linejoin="round" filter="url(#b1)"/>
<path class="L" d="M800.2,608.0 L804.5,609.0 L808.8,609.9 L813.1,610.7 L817.4,611.4 L821.7,611.9 L826.1,612.3 L830.4,612.6 L834.7,612.8 L839.0,612.8 L843.4,612.8 L847.7,612.6 L852.0,612.2 L856.3,611.8 L860.6,611.2 L865.0,610.6 L869.3,609.8 L873.5,608.8 L877.8,607.8 L882.1,606.6 L886.4,605.3" fill="none" stroke="rgb(215,215,215)" stroke-width="4" stroke-linecap="round" stroke-linejoin="round" filter="url(#b1)"/>
<path class="L" d="M867.2,607.3 L871.0,606.6 L874.8,605.7 L878.6,604.8 L882.3,603.7 L886.1,602.6 L889.9,601.3 L893.6,600.0 L897.4,598.6 L901.1,597.1 L904.8,595.5 L908.5,593.8 L912.2,592.0 L915.9,590.1 L919.5,588.1 L923.2,586.0 L926.8,583.9 L930.4,581.6 L934.0,579.3 L937.6,576.9 L941.2,574.3" fill="none" stroke="rgb(150,150,150)" stroke-width="5" stroke-linecap="round" stroke-linejoin="round" filter="url(#b1)"/>
<rect class="L" x="832" y="610" width="10" height="4" fill="rgb(255,255,255)"/>
<path class="L" d="M896.5,607.5 L901.7,605.4 L906.9,603.2 L912.1,600.7 L917.2,598.1 L922.3,595.3 L927.4,592.4 L932.5,589.2 L937.5,585.9 L942.5,582.4 L947.4,578.8 L952.3,575.0 L957.2,571.0 L962.0,566.8 L966.7,562.5 L971.5,558.0 L976.1,553.3 L980.8,548.5 L985.3,543.6 L989.9,538.5 L994.3,533.2" fill="none" stroke="rgb(122,122,122)" stroke-width="10" stroke-linecap="round" stroke-linejoin="round" filter="url(#b3)"/>
<path class="L" d="M949.7,612.4 L955.9,607.7 L962.1,602.8 L968.2,597.7 L974.2,592.3 L980.2,586.7 L986.1,580.8 L991.9,574.7 L997.6,568.3 L1003.2,561.8 L1008.8,555.0 L1014.3,547.9 L1019.6,540.7 L1024.9,533.2 L1030.1,525.6 L1035.2,517.7 L1040.2,509.6 L1045.1,501.3 L1049.9,492.8 L1054.6,484.1 L1059.1,475.3" fill="none" stroke="rgb(95,95,95)" stroke-width="7" stroke-linecap="round" stroke-linejoin="round" filter="url(#b3)"/>
<path class="L" d="M990.0,592.0 L970.0,615.0 L950.0,644.0" fill="none" stroke="rgb(160,160,160)" stroke-width="6" stroke-linecap="round" stroke-linejoin="round" filter="url(#b2)"/>
<path class="L" d="M975.0,600.0 L990.0,591.0" fill="none" stroke="rgb(175,175,175)" stroke-width="4" stroke-linecap="round" stroke-linejoin="round" filter="url(#b1)"/>
<path class="L" d="M1203.0,600.0 L1228.0,535.0" fill="none" stroke="rgb(165,165,165)" stroke-width="4" stroke-linecap="round" stroke-linejoin="round" filter="url(#b2)"/>
<path class="L" d="M694.2,281.3 L696.6,288.1 L699.1,294.7 L701.7,301.2 L704.5,307.6 L707.3,313.9 L710.2,320.1 L713.2,326.0 L716.3,331.9 L719.5,337.6 L722.7,343.2 L726.0,348.6 L729.5,353.8 L732.9,358.9 L736.5,363.8 L740.1,368.5 L743.8,373.1 L747.6,377.5 L751.4,381.7 L755.3,385.7 L759.3,389.5 L763.3,393.2 L767.4,396.6 L771.5,399.9 L775.6,403.0 L779.8,405.9 L784.1,408.5 L788.3,411.0 L792.6,413.3 L797.0,415.3 L801.4,417.2 L805.8,418.9 L810.2,420.3 L814.6,421.5 L819.1,422.6 L823.6,423.4 L828.0,424.0 L832.5,424.4 L837.0,424.6 L841.5,424.5 L846.0,424.3 L850.5,423.8 L855.0,423.1 L859.5,422.3 L863.9,421.2 L868.3,419.9 L872.8,418.4 L877.1,416.6 L881.5,414.7 L885.8,412.6 L890.2,410.2 L894.4,407.7 L898.6,405.0 L902.8,402.0 L907.0,398.9 L911.1,395.5 L915.1,392.0 L919.1,388.3 L923.0,384.4 L926.9,380.3 L930.7,376.1 L934.5,371.6 L938.1,367.0 L941.7,362.2 L945.3,357.2 L948.8,352.1 L952.1,346.8 L955.5,341.4 L958.7,335.8 L961.8,330.0 L964.9,324.1 L967.9,318.1 L970.7,311.9 L973.5,305.6 L976.2,299.2 L978.8,292.6 L981.3,285.9 L983.7,279.1 L986.0,272.2" fill="none" stroke="rgb(95,95,95)" stroke-width="2.4" stroke-linecap="round" stroke-linejoin="round" filter="url(#b1)"/>
<path class="L" d="M697.9,265.2 L699.6,270.4 L701.4,275.6 L703.2,280.7 L705.1,285.8 L707.1,290.7 L709.1,295.6 L711.2,300.4 L713.4,305.2 L715.6,309.8 L717.8,314.4" fill="none" stroke="rgb(160,160,160)" stroke-width="4.5" stroke-linecap="round" stroke-linejoin="round" filter="url(#b2)"/>
<path class="L" d="M736.5,208.9 L737.9,213.6 L739.3,218.3 L740.8,223.0 L742.3,227.5 L743.9,232.0 L745.6,236.4 L747.4,240.8 L749.2,245.0 L751.0,249.2 L753.0,253.3 L754.9,257.2 L757.0,261.1 L759.1,264.9 L761.3,268.6 L763.5,272.2 L765.7,275.7 L768.0,279.0 L770.4,282.3 L772.8,285.4 L775.3,288.5 L777.8,291.4 L780.3,294.2 L782.9,296.9 L785.5,299.4 L788.2,301.9 L790.9,304.2 L793.6,306.3 L796.3,308.4 L799.1,310.3 L801.9,312.1 L804.8,313.8 L807.6,315.3 L810.5,316.7 L813.4,317.9 L816.3,319.0 L819.3,320.0 L822.2,320.9 L825.2,321.6 L828.1,322.1 L831.1,322.5 L834.1,322.8 L837.1,323.0 L840.0,323.0 L843.0,322.8 L846.0,322.5 L849.0,322.1 L851.9,321.6 L854.9,320.9 L857.8,320.0 L860.8,319.0 L863.7,317.9 L866.6,316.7 L869.5,315.3 L872.3,313.8 L875.2,312.1 L878.0,310.3 L880.8,308.4 L883.5,306.3 L886.2,304.2 L888.9,301.9 L891.6,299.4 L894.2,296.9 L896.8,294.2 L899.3,291.4 L901.8,288.5 L904.3,285.4 L906.7,282.3 L909.1,279.0 L911.4,275.7 L913.6,272.2 L915.8,268.6 L918.0,264.9 L920.1,261.1 L922.2,257.2 L924.1,253.3 L926.1,249.2 L927.9,245.0 L929.7,240.8 L931.5,236.4 L933.2,232.0 L934.8,227.5 L936.3,223.0 L937.8,218.3 L939.2,213.6 L940.6,208.9" fill="none" stroke="rgb(72,72,72)" stroke-width="6" stroke-linecap="round" stroke-linejoin="round" filter="url(#b1)"/>
<path class="L" d="M736.5,208.9 L737.9,213.6 L739.3,218.3 L740.8,223.0 L742.3,227.5 L743.9,232.0 L745.6,236.4 L747.4,240.8 L749.2,245.0 L751.0,249.2 L753.0,253.3 L754.9,257.2 L757.0,261.1 L759.1,264.9 L761.3,268.6 L763.5,272.2 L765.7,275.7 L768.0,279.0 L770.4,282.3 L772.8,285.4 L775.3,288.5 L777.8,291.4 L780.3,294.2 L782.9,296.9 L785.5,299.4 L788.2,301.9 L790.9,304.2 L793.6,306.3 L796.3,308.4 L799.1,310.3 L801.9,312.1 L804.8,313.8 L807.6,315.3 L810.5,316.7 L813.4,317.9 L816.3,319.0 L819.3,320.0 L822.2,320.9 L825.2,321.6 L828.1,322.1 L831.1,322.5 L834.1,322.8 L837.1,323.0 L840.0,323.0 L843.0,322.8 L846.0,322.5 L849.0,322.1 L851.9,321.6 L854.9,320.9 L857.8,320.0 L860.8,319.0 L863.7,317.9 L866.6,316.7 L869.5,315.3 L872.3,313.8 L875.2,312.1 L878.0,310.3 L880.8,308.4 L883.5,306.3 L886.2,304.2 L888.9,301.9 L891.6,299.4 L894.2,296.9 L896.8,294.2 L899.3,291.4 L901.8,288.5 L904.3,285.4 L906.7,282.3 L909.1,279.0 L911.4,275.7 L913.6,272.2 L915.8,268.6 L918.0,264.9 L920.1,261.1 L922.2,257.2 L924.1,253.3 L926.1,249.2 L927.9,245.0 L929.7,240.8 L931.5,236.4 L933.2,232.0 L934.8,227.5 L936.3,223.0 L937.8,218.3 L939.2,213.6 L940.6,208.9" fill="none" stroke="rgb(118,118,118)" stroke-width="2.4" stroke-linecap="round" stroke-linejoin="round" filter="url(#b1)"/>
<path class="L" d="M758.3,263.5 L760.4,267.2 L762.7,270.9 L764.9,274.4 L767.2,277.9 L769.6,281.2 L772.0,284.4 L774.5,287.5 L777.0,290.5 L779.6,293.4 L782.2,296.1 L784.8,298.8 L787.5,301.2 L790.2,303.6 L792.9,305.8 L795.7,307.9 L798.5,309.9 L801.3,311.8 L804.2,313.5 L807.1,315.0 L810.0,316.4 L812.9,317.7 L815.9,318.9 L818.8,319.9" fill="none" stroke="rgb(128,128,128)" stroke-width="2.6" stroke-linecap="round" stroke-linejoin="round" filter="url(#b1)"/>
<path class="L" d="M854.3,321.0 L857.3,320.2 L860.2,319.2 L863.1,318.2 L866.0,316.9 L868.9,315.6 L871.7,314.1 L874.6,312.5 L877.4,310.7 L880.2,308.8 L882.9,306.8 L885.6,304.7 L888.3,302.4 L891.0,300.0 L893.6,297.5 L896.2,294.9 L898.7,292.1 L901.2,289.2 L903.7,286.2 L906.1,283.1 L908.4,279.9 L910.8,276.6 L913.0,273.1 L915.2,269.6 L917.4,266.0 L919.5,262.2 L921.6,258.4 L923.6,254.4 L925.5,250.4 L927.4,246.3 L929.2,242.1 L931.0,237.8 L932.7,233.4 L934.3,229.0 L935.8,224.4 L937.3,219.8 L938.8,215.2" fill="none" stroke="rgb(138,138,138)" stroke-width="3.5" stroke-linecap="round" stroke-linejoin="round" filter="url(#b1)"/>
<path class="L" d="M902.8,283.9 L905.1,280.9 L907.5,277.7 L909.8,274.4 L912.0,271.0 L914.2,267.5 L916.3,263.9 L918.4,260.2 L920.4,256.5 L922.4,252.6 L924.3,248.6" fill="none" stroke="rgb(182,182,182)" stroke-width="4.5" stroke-linecap="round" stroke-linejoin="round" filter="url(#b2)"/>
<path class="L" d="M917.2,287.6 L919.0,284.8 L920.7,282.1 L922.5,279.2 L924.2,276.3 L925.8,273.3 L927.5,270.3 L929.1,267.2 L930.6,264.1 L932.1,260.9 L933.6,257.6 L935.1,254.3 L936.5,251.0 L937.9,247.6 L939.3,244.2 L940.6,240.7 L941.9,237.2 L943.1,233.6 L944.3,230.0 L945.5,226.3 L946.6,222.6" fill="none" stroke="rgb(85,85,85)" stroke-width="3" stroke-linecap="round" stroke-linejoin="round" filter="url(#b2)"/>
<rect class="L" x="853" y="321" width="7" height="5" fill="rgb(250,250,250)"/>
<ellipse class="L" cx="905" cy="300" rx="5" ry="8.0" transform="rotate(30 905 300)" fill="rgb(118,118,118)" filter="url(#b2)"/>
<ellipse class="L" cx="940" cy="320" rx="4" ry="6.4" transform="rotate(30 940 320)" fill="rgb(112,112,112)" filter="url(#b2)"/>
<ellipse class="L" cx="915" cy="345" rx="4" ry="6.4" transform="rotate(30 915 345)" fill="rgb(110,110,110)" filter="url(#b2)"/>
<ellipse class="L" cx="960" cy="290" rx="6" ry="9.6" transform="rotate(30 960 290)" fill="rgb(122,122,122)" filter="url(#b2)"/>
<ellipse class="L" cx="950" cy="340" rx="4" ry="6.4" transform="rotate(30 950 340)" fill="rgb(108,108,108)" filter="url(#b2)"/>
<ellipse class="L" cx="895" cy="325" rx="3" ry="4.8" transform="rotate(30 895 325)" fill="rgb(115,115,115)" filter="url(#b2)"/>
<path class="L" d="M857.0,325.0 L864.0,360.0 L870.0,395.0" fill="none" stroke="rgb(132,132,132)" stroke-width="5" stroke-linecap="round" stroke-linejoin="round" filter="url(#b1)"/>
<path class="L" d="M866.0,304.0 L900.0,345.0 L922.0,380.0" fill="none" stroke="rgb(130,130,130)" stroke-width="8" stroke-linecap="round" stroke-linejoin="round" filter="url(#b2)"/>
<path class="L" d="M995.0,299.0 L975.0,335.0 L950.0,360.0 L926.0,381.0 L912.0,400.0" fill="none" stroke="rgb(140,140,140)" stroke-width="5" stroke-linecap="round" stroke-linejoin="round" filter="url(#b1)"/>
<path class="L" d="M990.0,305.0 L983.0,318.0" fill="none" stroke="rgb(165,165,165)" stroke-width="6" stroke-linecap="round" stroke-linejoin="round" filter="url(#b2)"/>
<rect class="L" x="922" y="377" width="6" height="5" fill="rgb(225,225,225)" transform="rotate(-35 925 380)"/>
<path class="L" d="M925,262 L955,280 L995,300" fill="none" stroke="rgb(122,122,122)" stroke-width="9" stroke-dasharray="9,5,6,7,12,4" filter="url(#b2)"/>
<path class="L" d="M925.0,290.0 L930.0,282.0" fill="none" stroke="rgb(160,160,160)" stroke-width="3" stroke-linecap="round" stroke-linejoin="round" filter="url(#b1)"/>
<path class="L" d="M1046.5,505.3 L1048.2,502.4 L1049.9,499.4 L1051.5,496.4 L1053.2,493.4 L1054.8,490.4 L1056.4,487.3 L1058.1,484.3 L1059.6,481.2 L1061.2,478.0 L1062.8,474.9 L1064.3,471.7 L1065.9,468.5 L1067.4,465.3 L1068.9,462.1 L1070.4,458.9 L1071.9,455.6 L1073.4,452.3 L1074.8,449.0 L1076.2,445.7 L1077.7,442.3" fill="none" stroke="rgb(100,100,100)" stroke-width="4" stroke-linecap="round" stroke-linejoin="round" filter="url(#b2)"/>
<path class="L" d="M1089.0,428.0 L1073.0,471.0" fill="none" stroke="rgb(128,128,128)" stroke-width="3.5" stroke-linecap="round" stroke-linejoin="round" filter="url(#b1)"/>
<path class="L" d="M1108.0,437.0 L1095.0,475.0" fill="none" stroke="rgb(120,120,120)" stroke-width="2.5" stroke-linecap="round" stroke-linejoin="round" filter="url(#b1)"/>
<path class="L" d="M1062.0,389.0 L1030.0,471.0" fill="none" stroke="rgb(72,72,72)" stroke-width="3" stroke-linecap="round" stroke-linejoin="round" filter="url(#b2)"/>
<path class="L" d="M837.8,122.3 L705.8,552.9 L712.2,558.9 L837.8,122.3 Z" fill="rgb(62,62,62)" filter="url(#b1)"/>
<line class="L" x1="838.55" y1="119.8" x2="709.0" y2="555.9" stroke="rgb(84,84,84)" stroke-width="2.2"/>
<line class="L" x1="819.0" y1="185.6" x2="709.0" y2="555.9" stroke="rgb(114,114,114)" stroke-width="2.4" stroke-dasharray="3,26,12,38,9,17,4,7,3,7,8,17,9,26,3,26" filter="url(#b1)"/>
<path class="L" d="M838.1,122.5 L754.9,590.5 L760.9,593.8 L838.1,122.5 Z" fill="rgb(62,62,62)" filter="url(#b1)"/>
<line class="L" x1="838.55" y1="119.8" x2="757.9" y2="592.2" stroke="rgb(80,80,80)" stroke-width="2.2"/>
<line class="L" x1="826.4" y1="191.1" x2="757.9" y2="592.2" stroke="rgb(110,110,110)" stroke-width="2.1" stroke-dasharray="8,14,3,19,9,26,3,17,12,27,4,25,10,26,6,21" filter="url(#b1)"/>
<path class="L" d="M838.3,122.6 L790.9,606.3 L798.0,608.4 L838.3,122.6 Z" fill="rgb(62,62,62)" filter="url(#b1)"/>
<line class="L" x1="838.55" y1="119.8" x2="794.4" y2="607.4" stroke="rgb(86,86,86)" stroke-width="2.2"/>
<line class="L" x1="831.9" y1="193.4" x2="794.4" y2="607.4" stroke="rgb(116,116,116)" stroke-width="2.4" stroke-dasharray="4,14,14,26,14,28,4,20,11,9,9,40,4,37,7,17" filter="url(#b1)"/>
<path class="L" d="M838.5,122.6 L821.5,612.8 L827.7,613.4 L838.5,122.6 Z" fill="rgb(62,62,62)" filter="url(#b1)"/>
<line class="L" x1="838.55" y1="119.8" x2="824.6" y2="613.1" stroke="rgb(80,80,80)" stroke-width="2.2"/>
<line class="L" x1="836.4" y1="194.3" x2="824.6" y2="613.1" stroke="rgb(110,110,110)" stroke-width="2.1" stroke-dasharray="13,39,6,8,3,11,3,19,13,25,13,7,13,25,8,40" filter="url(#b1)"/>
<path class="L" d="M838.5,122.6 L837.6,613.8 L845.3,613.6 L838.6,122.6 Z" fill="rgb(62,62,62)" filter="url(#b1)"/>
<line class="L" x1="838.55" y1="119.8" x2="841.4" y2="613.7" stroke="rgb(92,92,92)" stroke-width="2.2"/>
<line class="L" x1="839.0" y1="194.4" x2="841.4" y2="613.7" stroke="rgb(122,122,122)" stroke-width="2.6" stroke-dasharray="10,37,4,39,14,6,9,21,5,28,14,26,14,9,9,6" filter="url(#b1)"/>
<path class="L" d="M838.7,122.6 L858.0,612.5 L864.3,611.6 L838.7,122.6 Z" fill="rgb(62,62,62)" filter="url(#b1)"/>
<line class="L" x1="838.55" y1="119.8" x2="861.2" y2="612.1" stroke="rgb(84,84,84)" stroke-width="2.2"/>
<line class="L" x1="842.0" y1="194.1" x2="861.2" y2="612.1" stroke="rgb(114,114,114)" stroke-width="2.1" stroke-dasharray="14,33,10,14,3,22,7,12,9,33,12,14,11,30,11,27" filter="url(#b1)"/>
<path class="L" d="M838.8,122.5 L889.6,605.3 L896.6,602.7 L838.9,122.5 Z" fill="rgb(62,62,62)" filter="url(#b1)"/>
<line class="L" x1="838.55" y1="119.8" x2="893.1" y2="604.0" stroke="rgb(84,84,84)" stroke-width="2.2"/>
<line class="L" x1="846.8" y1="192.9" x2="893.1" y2="604.0" stroke="rgb(114,114,114)" stroke-width="2.4" stroke-dasharray="14,32,10,22,14,39,4,22,11,17,8,18,5,36,13,28" filter="url(#b1)"/>
<path class="L" d="M839.1,122.4 L931.8,584.7 L937.7,580.8 L839.1,122.4 Z" fill="rgb(62,62,62)" filter="url(#b1)"/>
<line class="L" x1="838.55" y1="119.8" x2="934.7" y2="582.8" stroke="rgb(78,78,78)" stroke-width="2.2"/>
<line class="L" x1="853.1" y1="189.7" x2="934.7" y2="582.8" stroke="rgb(108,108,108)" stroke-width="2.1" stroke-dasharray="10,34,14,30,14,26,8,29,6,10,12,14,14,25,6,15" filter="url(#b1)"/>
<path class="L" d="M839.3,122.2 L974.0,550.1 L979.0,545.0 L839.3,122.2 Z" fill="rgb(62,62,62)" filter="url(#b1)"/>
<line class="L" x1="838.55" y1="119.8" x2="976.5" y2="547.6" stroke="rgb(76,76,76)" stroke-width="2.2"/>
<line class="L" x1="859.4" y1="184.4" x2="976.5" y2="547.6" stroke="rgb(106,106,106)" stroke-width="1.9" stroke-dasharray="3,11,7,22,14,27,12,34,4,13,14,33,14,30,10,26" filter="url(#b1)"/>
</g></g>
<g stroke="#000" stroke-opacity="0.09" stroke-width="1.5"><line x1="214.5" y1="120" x2="214.5" y2="649"/><line x1="318.5" y1="120" x2="318.5" y2="649"/><line x1="422.5" y1="120" x2="422.5" y2="649"/><line x1="526.5" y1="120" x2="526.5" y2="649"/><line x1="630.5" y1="120" x2="630.5" y2="649"/><line x1="734.5" y1="120" x2="734.5" y2="649"/><line x1="839.5" y1="120" x2="839.5" y2="649"/><line x1="943.5" y1="120" x2="943.5" y2="649"/><line x1="1047.5" y1="120" x2="1047.5" y2="649"/><line x1="1151.5" y1="120" x2="1151.5" y2="649"/><line x1="1255.5" y1="120" x2="1255.5" y2="649"/><line x1="1359.5" y1="120" x2="1359.5" y2="649"/><line x1="1463.5" y1="120" x2="1463.5" y2="649"/><line x1="136" y1="166.5" x2="1540" y2="166.5"/><line x1="136" y1="213.5" x2="1540" y2="213.5"/><line x1="136" y1="260.5" x2="1540" y2="260.5"/><line x1="136" y1="306.5" x2="1540" y2="306.5"/><line x1="136" y1="353.5" x2="1540" y2="353.5"/><line x1="136" y1="399.5" x2="1540" y2="399.5"/><line x1="136" y1="446.5" x2="1540" y2="446.5"/><line x1="136" y1="493.5" x2="1540" y2="493.5"/><line x1="136" y1="539.5" x2="1540" y2="539.5"/><line x1="136" y1="586.5" x2="1540" y2="586.5"/><line x1="136" y1="632.5" x2="1540" y2="632.5"/></g>
<rect x="135.5" y="119.5" width="1405" height="530" fill="none" stroke="#707070" stroke-width="1"/>
<g font-size="18" fill="#5a5a5a"><text x="123" y="129.4" text-anchor="end">0</text><text x="123" y="176.0" text-anchor="end">5</text><text x="123" y="222.6" text-anchor="end">10</text><text x="123" y="269.2" text-anchor="end">15</text><text x="123" y="315.8" text-anchor="end">20</text><text x="123" y="362.4" text-anchor="end">25</text><text x="123" y="409.0" text-anchor="end">30</text><text x="123" y="455.6" text-anchor="end">35</text><text x="123" y="502.2" text-anchor="end">40</text><text x="123" y="548.8" text-anchor="end">45</text><text x="123" y="595.4" text-anchor="end">50</text><text x="123" y="642.0" text-anchor="end">55</text><text x="213.7" y="680" text-anchor="middle">-120</text><text x="317.9" y="680" text-anchor="middle">-100</text><text x="422.0" y="680" text-anchor="middle">-80</text><text x="526.1" y="680" text-anchor="middle">-60</text><text x="630.3" y="680" text-anchor="middle">-40</text><text x="734.4" y="680" text-anchor="middle">-20</text><text x="838.5" y="680" text-anchor="middle">0</text><text x="942.7" y="680" text-anchor="middle">20</text><text x="1046.8" y="680" text-anchor="middle">40</text><text x="1151.0" y="680" text-anchor="middle">60</text><text x="1255.1" y="680" text-anchor="middle">80</text><text x="1359.2" y="680" text-anchor="middle">100</text><text x="1463.4" y="680" text-anchor="middle">120</text></g>
<text x="770" y="710" font-size="17.5" fill="#5a5a5a" textLength="135" lengthAdjust="spacingAndGlyphs">Across Track (m)</text>
<text transform="translate(32,483) rotate(-90)" x="0" y="0" font-size="17.5" fill="#5a5a5a" textLength="196" lengthAdjust="spacingAndGlyphs">Depth (m) (unrefracted)</text>
<text x="7" y="756" font-size="20" fill="#000" xml:space="preserve" style="white-space:pre" textLength="259" lengthAdjust="spacingAndGlyphs">Across -158.79  Depth 15.89</text>
</svg></body></html>
